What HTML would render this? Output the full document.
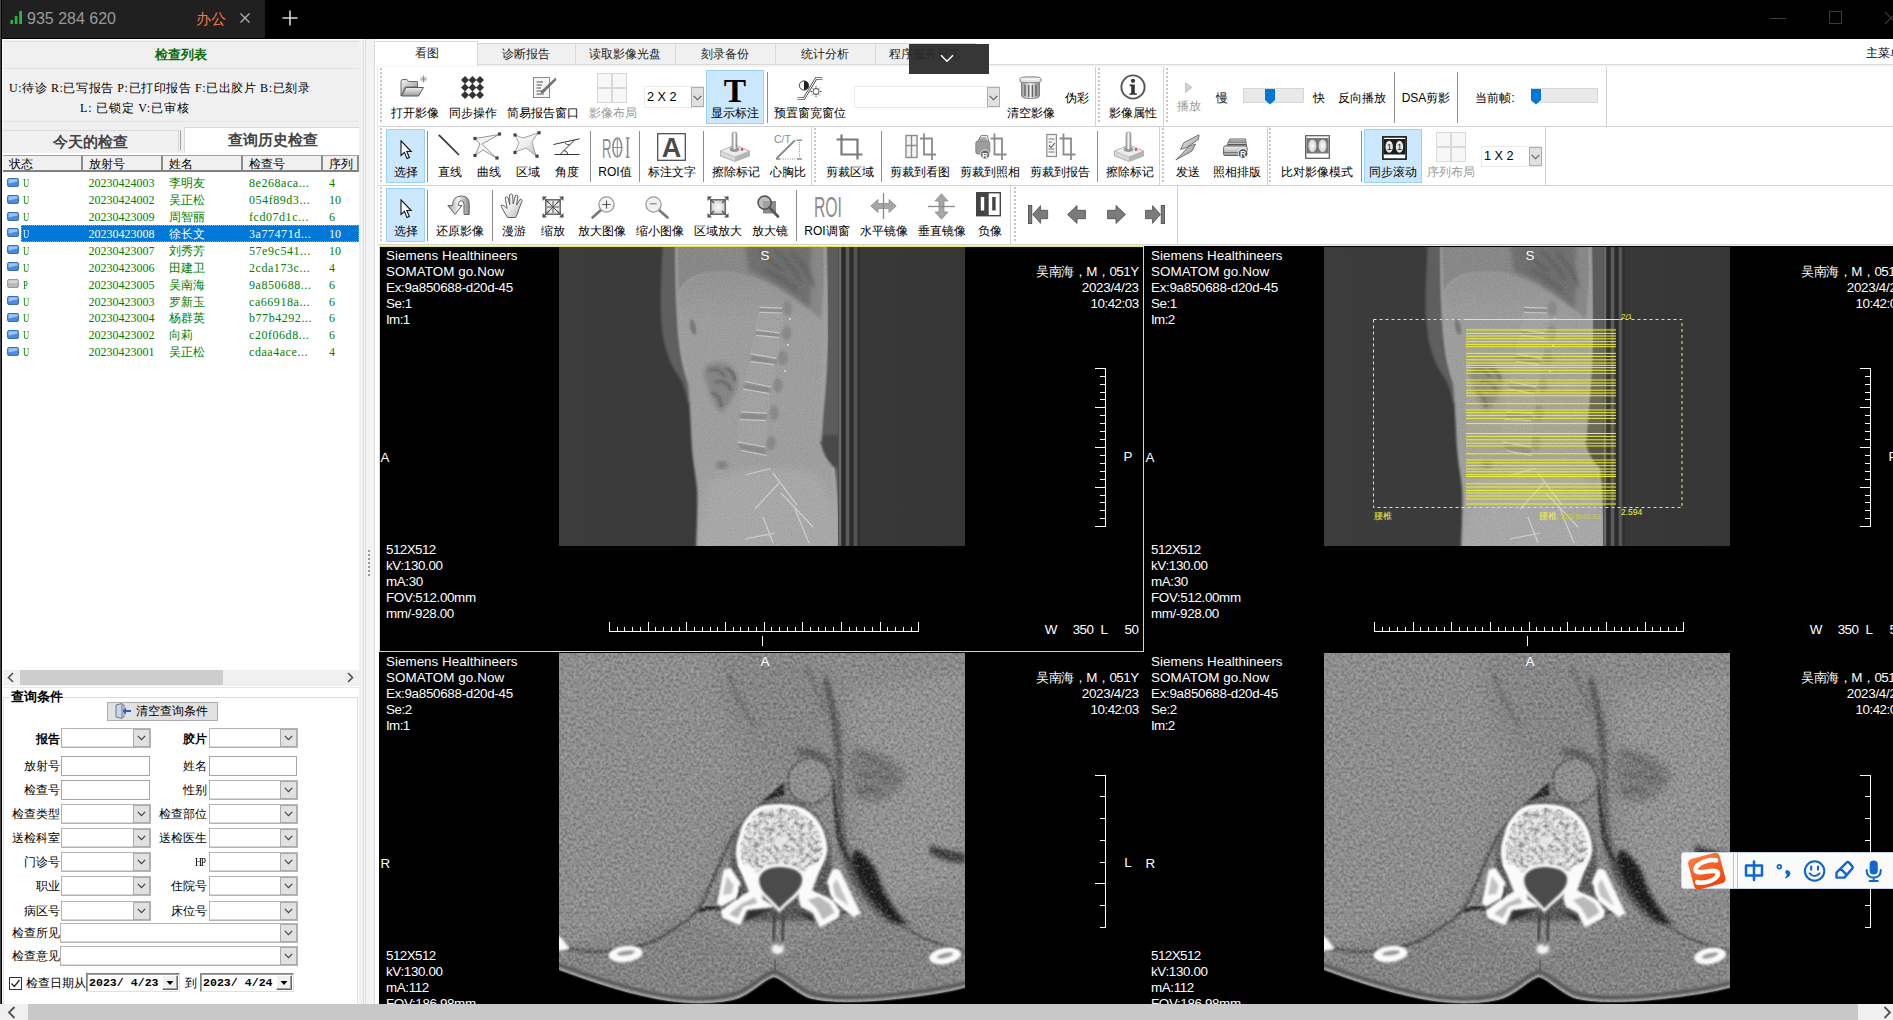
<!DOCTYPE html>
<html lang="zh"><head><meta charset="utf-8"><title>PACS</title><style>
*{box-sizing:border-box;margin:0;padding:0}
html,body{width:1893px;height:1020px;overflow:hidden;background:#f0f0f0}
body{position:relative;font-family:"Liberation Sans",sans-serif;font-size:12px;color:#000}
.a{position:absolute}
.t{position:absolute;white-space:pre;line-height:14px}
.c{text-align:center}
.sf{font-family:"Liberation Serif",serif}
.ss{font-family:"Liberation Sans",sans-serif}
.lbl{position:absolute;white-space:pre;font-size:12px;line-height:14px;height:14px;text-align:center;color:#000}
.dis{color:#9a9a9a}
.sel{position:absolute;background:#cce8ff;border:1px solid #99d1ff}
.sep{position:absolute;width:1px;background:#8c8c8c}
.grip{position:absolute;width:2px;background-image:repeating-linear-gradient(to bottom,#c6c6c6 0,#c6c6c6 2px,transparent 2px,transparent 4px)}
.tb{position:absolute;background:#fff;border-right:1px solid #d2d2d2}
.combo{position:absolute;background:#fff;border:1px solid #ebebeb}
.cbtn{position:absolute;background:#e1e1e1;border:1px solid #adadad}
.inp{position:absolute;background:#fff;border:1px solid #a9a9a9;height:20px}
.vp{position:absolute;background:#000;overflow:hidden}
.vt{position:absolute;white-space:pre;color:#fff;font-size:13.4px;line-height:16px}
.row{position:absolute;left:3px;width:356px;height:17px;color:#008000}
.row .t{top:2px}
.hd{position:absolute;top:155px;height:17px;background:#f0f0f0;border-right:2px solid #8a8a8a;border-top:1px solid #a0a0a0;border-bottom:2px solid #808080;font-size:12px;line-height:16px;padding-left:6px;white-space:pre}
</style></head><body>
<svg width="0" height="0" style="position:absolute"><defs>
<linearGradient id="gm" x1="0" y1="0" x2="1" y2="1"><stop offset="0" stop-color="#f4f4f4"/><stop offset="1" stop-color="#8d8d8d"/></linearGradient>
<linearGradient id="gl" x1="0" y1="0" x2="1" y2="1"><stop offset="0" stop-color="#fff"/><stop offset="0.5" stop-color="#ededed"/><stop offset="1" stop-color="#b4b4b4"/></linearGradient>
<linearGradient id="gv" x1="0" y1="0" x2="0" y2="1"><stop offset="0" stop-color="#f2f2f2"/><stop offset="1" stop-color="#9a9a9a"/></linearGradient>
<linearGradient id="gh" x1="0" y1="0" x2="1" y2="0"><stop offset="0" stop-color="#9a9a9a"/><stop offset="0.5" stop-color="#f5f5f5"/><stop offset="1" stop-color="#8a8a8a"/></linearGradient>
<radialGradient id="gr"><stop offset="0" stop-color="#fff"/><stop offset="1" stop-color="#d0d0d0"/></radialGradient>
</defs></svg>
<svg width="0" height="0" style="position:absolute"><defs>
<filter id="nz" x="0" y="0" width="100%" height="100%" color-interpolation-filters="sRGB"><feTurbulence type="fractalNoise" baseFrequency="0.34" numOctaves="2" seed="7" result="t"/>
<feColorMatrix in="t" type="matrix" values="0 0 0 0 1  0 0 0 0 1  0 0 0 0 1  2.4 0 0 0 -1.2" result="w"/>
<feColorMatrix in="t" type="matrix" values="0 0 0 0 0  0 0 0 0 0  0 0 0 0 0  -2.4 0 0 0 1.2" result="k"/>
<feMerge result="m"><feMergeNode in="w"/><feMergeNode in="k"/></feMerge><feGaussianBlur in="m" stdDeviation="0.6"/></filter>
<filter id="nz2" x="0" y="0" width="100%" height="100%" color-interpolation-filters="sRGB"><feTurbulence type="fractalNoise" baseFrequency="0.8" numOctaves="2" seed="11" result="t"/>
<feColorMatrix in="t" type="matrix" values="0 0 0 0 1  0 0 0 0 1  0 0 0 0 1  2.2 0 0 0 -1.1" result="w"/>
<feColorMatrix in="t" type="matrix" values="0 0 0 0 0  0 0 0 0 0  0 0 0 0 0  -2.2 0 0 0 1.1" result="k"/>
<feMerge><feMergeNode in="w"/><feMergeNode in="k"/></feMerge></filter>
<filter id="nzb" x="0" y="0" width="100%" height="100%" color-interpolation-filters="sRGB"><feTurbulence type="fractalNoise" baseFrequency="0.2" numOctaves="2" seed="5" result="t"/>
<feColorMatrix in="t" type="matrix" values="0 0 0 0 1  0 0 0 0 1  0 0 0 0 1  4.5 0 0 0 -2.0" result="w"/>
<feColorMatrix in="t" type="matrix" values="0 0 0 0 0.45  0 0 0 0 0.45  0 0 0 0 0.45  -4.5 0 0 0 2.0" result="k"/>
<feMerge><feMergeNode in="w"/><feMergeNode in="k"/></feMerge></filter>
<filter id="b0"><feGaussianBlur stdDeviation="0.35"/></filter>
<filter id="b05"><feGaussianBlur stdDeviation="0.55"/></filter>
<filter id="b1"><feGaussianBlur stdDeviation="0.8"/></filter>
<filter id="b2"><feGaussianBlur stdDeviation="2"/></filter>
<filter id="b3"><feGaussianBlur stdDeviation="3.5"/></filter>
<filter id="b6"><feGaussianBlur stdDeviation="7"/></filter>
<linearGradient id="xbg" x1="0" y1="0" x2="1" y2="0"><stop offset="0" stop-color="#3c3c3c"/><stop offset="0.6" stop-color="#393939"/><stop offset="1" stop-color="#363636"/></linearGradient>
<linearGradient id="xbody" x1="0" y1="0" x2="0" y2="1"><stop offset="0" stop-color="#8e8e8e"/><stop offset="0.25" stop-color="#9e9e9e"/><stop offset="0.75" stop-color="#a0a0a0"/><stop offset="1" stop-color="#a8a8a8"/></linearGradient>
<clipPath id="xclip"><rect x="0" y="0" width="406" height="299"/></clipPath>
<clipPath id="bclip"><path d="M116 0 L120 90 L130 136 L138 244 L137 299 L279 299 L275 219 L262 194 L268 87 L267 0 Z"/></clipPath>
<clipPath id="cclip"><rect x="0" y="0" width="406" height="352"/></clipPath>
<clipPath id="vbclip"><path d="M218.6 154.5 C206 154.5 199 157 194.8 162 C189.4 168.4 186 173.6 184.8 179.6 C182 187 180.6 194 180.8 200.5 C181 206 183 211.6 186.2 215.4 L198 221 L242 221 L255.8 215.4 C261.4 209.6 264.4 202 264.3 195.5 C263.9 188 261.6 180.6 258.2 174.4 C254.6 168 249.6 163.2 244 159.6 C236 155.4 227.6 154.5 218.6 154.5 Z"/></clipPath>

<g id="xray">
 <rect x="0" y="0" width="406" height="299" fill="url(#xbg)"/>
 <g clip-path="url(#xclip)">
  <!-- band between body and table -->
  <rect x="262" y="-2" width="18" height="303" fill="#5c5c5c"/>
  <!-- outer soft tissue (upper left only) -->
  <path d="M103.6 -2 C102 30 101 55 102 71.5 C103 82 104 90 105.2 96.6 C108 106 110 112 113 118.5 C117 126 120 130 122.5 134 C125 140 127 146 129 156 L140 150 L130 -2 Z" fill="#5f5f5f" filter="url(#b1)"/>
  <!-- main body -->
  <path d="M116.2 -2 C116 15 116.4 28 116.8 40 C117.4 58 118 72 119.3 87 C120.4 98 122 110 124 118.5 C125.6 125 127 130 128.7 134 C130 146 130.6 158 131.2 168.7 C131.8 178 132 186 132.5 193.8 C133 203 134 212 135 219 C136.4 228 137.6 236 138.2 244 C138.6 262 137.8 280 137.2 301 L279.4 301 C279 270 278 240 274.6 219 C268 212 263 204 262 193.8 C262 178 264 164 265.2 150 C267 130 268 108 268.4 87 C268.4 58 267.4 28 266.8 -2 Z" fill="url(#xbody)" filter="url(#b1)"/>
  <!-- upper/lung darker region above diaphragm -->
  <path d="M117 -2 L119.3 46 C124 36 128 32 131.9 30.7 C138 27 144 26 150.7 26 C162 25.5 174 26 185.2 27.5 C196 30 205 33 213.5 37 C220 41 226 45 232.3 49.5 C238 53 243 57 248 60.5 L262 72 L267 -2 Z" fill="#888" filter="url(#b1)"/>
  <path d="M186 -2 L190 24 C204 30 222 40 236 50 C242 54 247 58 251 62 L252 -2 Z" fill="#707070" filter="url(#b2)"/>
  <path d="M200 4 C210 10 214 20 226 24 M216 2 C224 14 236 18 240 34 M232 4 C240 16 250 22 254 40 M206 22 C216 30 226 30 238 44" stroke="#5c5c5c" stroke-width="3" fill="none" filter="url(#b2)"/>
  <!-- bright diaphragm line -->
  <path d="M120 46 C126 34 136 27 150.7 26 C166 25 176 26 187 28" fill="none" stroke="#a2a2a2" stroke-width="1.2" filter="url(#b1)"/>
  <!-- left skin line bright -->
  <path d="M117.5 -2 C117 30 118.4 62 120.6 88 C122 104 125 120 130 136" fill="none" stroke="#a6a6a6" stroke-width="1.3" filter="url(#b1)"/>
  <!-- bowel gas mottled -->
  <path d="M146 120 C154 114 166 114 172 120 C180 126 180 138 176 146 C172 154 168 160 162 166 C156 160 152 150 150 142 C146 134 144 126 146 120 Z" fill="#858585" filter="url(#b2)"/>
  <path d="M150 124 C156 120 162 124 166 130 M156 136 C162 132 170 136 172 144 M152 146 C158 146 162 152 162 160 M166 122 C172 122 176 128 176 134" stroke="#6c6c6c" stroke-width="3.2" fill="none" filter="url(#b1)"/>
  <ellipse cx="134" cy="80" rx="2.6" ry="8" fill="#767676" filter="url(#b1)" transform="rotate(-12 134 80)"/>
  <ellipse cx="163" cy="218" rx="6" ry="4" fill="#7e7e7e" filter="url(#b2)"/>
  <!-- pelvis brighter -->
  <path d="M150 236 C176 222 222 216 252 226 C270 236 274 262 276 301 L142 301 Z" fill="#a8a8a8" filter="url(#b3)"/>
  <!-- lower back dark notch -->
  <path d="M262 188 C262 200 266 210 275 220 L281 222 L281 188 Z" fill="#4a4a4a" filter="url(#b1)"/>
  <!-- right bright skin edge -->
  <path d="M266 -2 C267 30 268 60 267.6 87 C267 110 266 130 264.4 150 C263 166 261.5 180 261.5 194" fill="none" stroke="#a8a8a8" stroke-width="2.2" filter="url(#b1)"/>
  <path d="M274 220 C277 240 278 270 278.6 301" fill="none" stroke="#b0b0b0" stroke-width="1.8" filter="url(#b1)"/>
  <!-- spine -->
  <path d="M200.5 65.3 L223.4 66 L220.6 86 L197 82.8 Z M197 88.3 L220 90.6 L217.5 111.4 L191.6 106.7 Z M191.6 114.6 L215 117.7 L212 140 L186 134.5 Z M184 142 L210 146.6 L208 166.2 L182 164.8 Z M181 172.6 L207 173.6 L206 200 L179 194.8 Z" fill="#a3a3a3" filter="url(#b1)"/>
  <g fill="#8a8a8a" filter="url(#b1)">
   <path d="M200 61 L223 62 L223 65 L200 64.5Z M197 84 L220.6 87 L220.6 90 L197 87.8Z M191.6 108 L217.5 112.5 L217.5 117 L191.6 114Z M186 136 L212 141 L210 146 L184 141.5Z M182 166 L208 167.5 L207 173 L181 172Z M179 196 L206 201 L208 207.5 L182 202.5Z"/>
   <ellipse cx="228.5" cy="61" rx="4.8" ry="7.5"/><ellipse cx="227.7" cy="86" rx="4.8" ry="7.5"/><ellipse cx="223.8" cy="111" rx="4.8" ry="7.5"/><ellipse cx="219" cy="138" rx="4.8" ry="7.5"/><ellipse cx="215" cy="166" rx="4.8" ry="7.5"/><ellipse cx="212" cy="196" rx="4.8" ry="7"/>
  </g>
  <g stroke="#c8c8c8" stroke-width="1.25" fill="none" filter="url(#b05)">
   <path d="M200 60.3 L223 61.2 M200.5 65.3 L223.4 66 M197 82.8 L220.6 86 M197 88.3 L220 90.6 M191.6 106.7 L217.5 111.4 M191.6 114.6 L215 117.7 M186 134.5 L212 140 M184 142 L210 146.6 M182 164.8 L208 166.2 M181 172.6 L207 173.6 M179 194.8 L206 200 M182 203.5 L208 208.6 M186 228 L212 221.5"/>
   <path d="M196 262 L220 236 M214 226 L238 258 M222 246 L254 280 M186 292 L216 286 M204 270 L214 296 M236 262 L250 296" stroke="#d0d0d0"/>
   <path d="M223 66 L223.6 80 L220.6 86 M220 90.6 L219.6 104 L217.5 111.4 M215 117.7 L214.6 132 L212 140 M210 146.6 L209.6 160 L208 166.2 M207 173.6 L207.4 190 L206 200 M200.5 65.3 L198 78 L197 82.8 M197 88.3 L193 102 L191.6 106.7 M191.6 114.6 L187 130 L186 134.5 M184 142 L182.4 158 L182 164.8 M181 172.6 L179 190 L179 194.8" stroke-width="0.9" stroke="#adadad" opacity="0.6"/>
   <circle cx="231" cy="72" r="1" fill="#ddd" stroke="none"/><circle cx="229" cy="98" r="1" fill="#ddd" stroke="none"/><circle cx="226" cy="124" r="1" fill="#ddd" stroke="none"/>
  </g>
  <!-- grain -->
  <g clip-path="url(#bclip)"><rect x="103" y="0" width="176" height="299" filter="url(#nz2)" opacity="0.10"/></g>
  <!-- table stripes -->
  <rect x="279" y="0" width="23" height="299" fill="#3a3a3a"/>
  <rect x="279.5" y="0" width="2.5" height="299" fill="#6a6a6a"/><rect x="283" y="0" width="3" height="299" fill="#2a2a2a"/><rect x="287" y="0" width="3" height="299" fill="#5a5a5a"/><rect x="291" y="0" width="3" height="299" fill="#2c2c2c"/><rect x="295" y="0" width="3" height="299" fill="#555"/><rect x="299" y="0" width="2.5" height="299" fill="#303030"/>
 </g>
</g>

<g id="ctax">
 <g clip-path="url(#cclip)">
  <rect x="0" y="0" width="406" height="352" fill="#8a8a8a"/>
  <!-- broad tone regions -->
  <path d="M0 0 H180 L175 120 L150 200 L120 260 L60 300 L0 290 Z" fill="#8e8e8e" filter="url(#b6)"/>
  <path d="M290 40 L406 20 V230 L330 250 L300 200 Z" fill="#939393" filter="url(#b6)"/>
  <path d="M0 300 L120 262 L215 300 L320 262 L406 300 V352 H0 Z" fill="#838383" filter="url(#b6)"/>
  <path d="M150 0 L260 0 L265 90 L220 120 L170 80 Z" fill="#868686" filter="url(#b6)"/>
  <!-- dark fat planes right -->
  <path d="M268 20 C276 50 282 70 283 100 C284 130 282 150 286 180 C290 205 300 225 318 250 C328 262 336 268 342 272 L330 270 C312 258 296 240 286 214 C278 190 279 160 278 130 C277 100 272 60 264 30 Z" fill="#585858" filter="url(#b2)"/>
  <path d="M296 196 C306 200 318 214 322 232 C330 248 338 262 350 272 L336 270 C316 256 300 232 292 208 Z" fill="#1e1e1e" filter="url(#b2)"/>
  <path d="M372 192 C384 196 398 200 406 200 L406 210 C392 210 380 206 370 200 Z" fill="#3c3c3c" filter="url(#b2)"/>
  <!-- hilum mottled -->
  <path d="M290 96 C306 92 330 100 346 116 C350 128 340 140 328 146 C316 152 304 150 296 144 C290 132 288 112 290 96 Z" fill="#7a7a7a" filter="url(#b3)"/>
  <path d="M300 100 C312 104 322 112 332 118 M302 122 C314 118 326 124 340 128 M298 140 C306 134 316 136 322 142" stroke="#5a5a5a" stroke-width="2.4" fill="none" filter="url(#b2)"/>
  <path d="M236 96 C250 92 262 98 270 104 L276 120 C268 112 254 104 238 102 Z" fill="#5e5e5e" filter="url(#b2)"/>
  <!-- upper dark streaks -->
  <path d="M170 20 C176 40 184 58 196 72" stroke="#6e6e6e" stroke-width="4" fill="none" filter="url(#b2)"/>
  <path d="M246 14 C256 30 262 44 266 60" stroke="#707070" stroke-width="4" fill="none" filter="url(#b2)"/>
  <!-- crus lines left of vertebra -->
  <path d="M226 132 C205 150 185 165 170 190 C158 215 150 240 138 258 C120 276 100 286 84 292 C60 300 30 300 10 296" stroke="#525252" stroke-width="3" fill="none" filter="url(#b1)"/>
  <path d="M222 140 C204 156 190 172 178 196 C168 220 162 240 150 256" stroke="#6a6a6a" stroke-width="2" fill="none" filter="url(#b1)"/>
  <path d="M140 258 C150 254 160 252 170 262" stroke="#2a2a2a" stroke-width="4" fill="none" filter="url(#b1)"/>
  <!-- right side muscle boundary -->
  <path d="M342 272 C356 282 376 292 406 298" stroke="#5a5a5a" stroke-width="2.5" fill="none" filter="url(#b1)"/>
  <path d="M300 262 C290 258 282 256 274 262" stroke="#3a3a3a" stroke-width="3.5" fill="none" filter="url(#b1)"/>
  <path d="M224 130 C214 140 204 148 196 153 C200 150 212 146 226 142 Z" fill="#2c2c2c" filter="url(#b1)"/>
  <path d="M276 126 C277 150 280 170 284 190 C287 200 292 208 298 214 C290 210 283 202 279 190 C275 172 274 150 273 128 Z" fill="#3a3a3a" filter="url(#b1)"/>
  <!-- aorta -->
  <circle cx="251" cy="128" r="24" fill="#626262" filter="url(#b1)"/>
  <circle cx="251" cy="128" r="21.5" fill="#8f8f8f" filter="url(#b1)"/>
  <!-- dark around vertebra -->
  <path d="M222 146 C190 148 170 178 172 212 C160 236 152 256 166 268 L280 268 C292 250 282 232 272 212 C274 178 256 148 222 146 Z" fill="#5a5a5a" filter="url(#b2)"/>
  <!-- noise over soft tissue -->
  <rect x="0" y="0" width="406" height="352" filter="url(#nz)" opacity="0.25"/>
  <!-- vertebral body -->
  <path d="M218.6 151 C205 151 197 153.5 192.5 159.3 C186 166.5 182.5 172 181.3 178.5 C178.5 186 176.6 194 176.8 200.8 C177 206 178.4 210 180.2 214.5 L196 238 L244 238 L261.6 214.5 C266.2 208 268.4 202 268.3 195.2 C267.9 187 265.4 179 261.8 172.6 C257.9 165.6 252.7 160.6 246.7 156.6 C238 152 228 151 218.6 151 Z" fill="#fafafa" filter="url(#b1)"/>
  <path d="M218.6 155.5 C206 155.5 199.5 158 195.5 162.8 C190 169 186.8 174 185.6 180 C183 187 181.6 194 181.8 200.5 C182 206 184 211 187 214.5 L198 220 L242 220 L255 214.5 C260.5 209 263.4 202 263.3 195.5 C262.9 188 260.6 181 257.4 175 C253.8 168.6 249 164 243.6 160.4 C236 156.4 227.6 155.5 218.6 155.5 Z" fill="#c4c4c4" filter="url(#b1)"/>
  <g clip-path="url(#vbclip)"><rect x="176" y="150" width="94" height="74" filter="url(#nzb)" opacity="0.6"/></g>
  <path d="M212 186 C218 182 226 182 230 188 C226 192 216 192 212 186 Z" fill="#ececec" filter="url(#b2)"/>
  <!-- facets -->
  <path d="M158.9 250.2 L165.5 217.6 L171 215.7 L180.8 230.6 L177 244.2 L162.7 252.4 Z" fill="#fafafa" stroke="#fafafa" stroke-width="2" stroke-linejoin="round" filter="url(#b1)"/>
  <path d="M164 242 L168 223 L174.5 232.5 L172.6 240.6 Z" fill="#c2c2c2" filter="url(#b1)"/>
  <path d="M300.5 260.4 L280 217.6 L274.4 216.7 L268.9 228.8 L272.6 245.5 L294.9 263.2 Z" fill="#fafafa" stroke="#fafafa" stroke-width="2" stroke-linejoin="round" filter="url(#b1)"/>
  <path d="M290 253 L277.5 226 L274 232 L276.4 243 Z" fill="#c2c2c2" filter="url(#b1)"/>
  <!-- pedicles + laminae -->
  <path d="M179.8 211 L192 213.5 L203 232 L202.5 246.5 L213.4 253.2 L187.4 256.2 L180.6 271 L164.4 264.4 L162.6 258.4 L179.6 245.6 L191 239 Z" fill="#fafafa" stroke="#fafafa" stroke-width="2" stroke-linejoin="round" filter="url(#b1)"/>
  <path d="M170 261 L183 250.5 L195.5 244.5 L198.4 250 L184.6 253.4 L178.6 265 Z" fill="#bababa" filter="url(#b1)"/>
  <path d="M262 211 L250 213.5 L240 232 L240.6 246.5 L242.6 253.2 L254 258.8 L261.4 273 L278.4 264.4 L280.2 258.4 L272.8 247.2 L252 238 Z" fill="#fafafa" stroke="#fafafa" stroke-width="2" stroke-linejoin="round" filter="url(#b1)"/>
  <path d="M249 247 L259.6 243.8 L270.4 250.4 L275.4 259.4 L264 266.4 L257.4 255 Z" fill="#bababa" filter="url(#b1)"/>
  <!-- joint lines -->
  <path d="M180.5 233 C182 238 181 243 177.5 246.5" stroke="#3a3a3a" stroke-width="1.6" fill="none" filter="url(#b1)"/>
  <path d="M268.6 232 C268 238 270 243 274 247" stroke="#4a4a4a" stroke-width="1.4" fill="none" filter="url(#b1)"/>
  <!-- canal -->
  <path d="M220.4 210.8 C209 210.8 199 215.5 197.2 225 C196.2 232.5 200.6 239.6 206 245 C211.4 250.4 216.6 254.6 220.4 259.4 C224.4 254.6 230.4 249.6 237 244.2 C242.6 238.6 247.4 231.6 246.2 224.4 C244.6 215.2 232 210.8 220.4 210.8 Z" fill="#fafafa" filter="url(#b1)"/>
  <path d="M220.4 214 C211 214 202.4 217.4 200.4 225 C199.4 231.6 203.2 237.6 208 242.6 C213 247.6 217 251.4 220.4 255.4 C224 251.4 229 246.8 234.8 241.8 C239.8 236.8 244 231 243 224.6 C241.6 217.4 231 214 220.4 214 Z" fill="#4c4c4c" filter="url(#b1)"/>
  <!-- dark under arch -->
  <path d="M190 258 L186 268 L200 262 L213 256.5 Z M252 262 L256 270 L244 262 L232 257 Z" fill="#2e2e2e" filter="url(#b1)"/>
  <!-- spinous -->
  <path d="M215.5 262 L214.5 288 M224.5 262 L223.5 288" stroke="#3a3a3a" stroke-width="2.4" filter="url(#b1)"/>
  <ellipse cx="218.6" cy="296.6" rx="8" ry="5.6" fill="#a8a8a8" filter="url(#b2)"/>
  <path d="M213 294 L217 291.6 L221 294 L224.6 292 L224 298.5 L219 301 L214 299.4 Z" fill="#f2f2f2" filter="url(#b1)"/>
  <path d="M216.6 306 L215.6 322" stroke="#4a4a4a" stroke-width="2" filter="url(#b1)"/>
  <!-- ribs -->
  <g filter="url(#b1)"><ellipse cx="66.5" cy="301" rx="17" ry="8" fill="#fafafa" transform="rotate(-6 66.5 301)"/><ellipse cx="67" cy="300" rx="9" ry="2.6" fill="#9a9a9a" transform="rotate(-8 67 300)"/>
  <ellipse cx="386" cy="303" rx="16" ry="8" fill="#fafafa" transform="rotate(-10 386 303)"/><ellipse cx="386" cy="302.5" rx="8.5" ry="2.6" fill="#9a9a9a" transform="rotate(-14 386 302.5)"/>
  <path d="M-2 280 L8 292 L10 296 L-2 298Z" fill="#fafafa"/></g>
  <!-- outside body (air) -->
  <path d="M-2 316 C30 328 70 342 110 348 C140 352 165 350 180 345 C196 338 206 326 215 324 C224 326 234 338 250 345 C268 350 300 350 338 346 C365 343 390 339 408 334 L408 354 L-2 354 Z" fill="#000"/>
  <path d="M-2 311 C30 323 70 337 110 343.5 C140 347.5 163 345.5 178 340.5 C194 333.5 205 320.5 215 318.5 C225 320.5 236 333.5 252 340.5 C268 345.5 300 346 338 341.5 C365 338.5 390 334.5 408 329.5" fill="none" stroke="#5c5c5c" stroke-width="4" filter="url(#b1)"/>
  <path d="M-2 315 C30 327 70 341 110 347 C140 351 165 349 180 344 C196 337 206 325 215 323 C224 325 234 337 250 344 C268 349 300 349 338 345 C365 342 390 338 408 333" fill="none" stroke="#b0b0b0" stroke-width="1.6" filter="url(#b1)"/>
 </g>
</g>
</defs></svg>
<div class="a" style="left:379px;top:246px;width:1514px;height:758px;background:#000"></div>
<div class="vp" style="left:380px;top:247px;width:764px;height:404px"><svg class="a" style="left:179px;top:0" width="406" height="299" viewBox="0 0 406 299"><use href="#xray"/></svg><svg class="a" style="left:0;top:0" width="764" height="405" viewBox="0 0 764 405"><path d="M725.5 121.25V279.75M715.0 121.25H725.5M720.0 129.18H725.5M720.0 137.10H725.5M720.0 145.03H725.5M720.0 152.95H725.5M715.0 160.88H725.5M720.0 168.80H725.5M720.0 176.72H725.5M720.0 184.65H725.5M720.0 192.57H725.5M715.0 200.50H725.5M720.0 208.43H725.5M720.0 216.35H725.5M720.0 224.27H725.5M720.0 232.20H725.5M715.0 240.12H725.5M720.0 248.05H725.5M720.0 255.97H725.5M720.0 263.90H725.5M720.0 271.82H725.5M715.0 279.75H725.5" stroke="#fff" stroke-width="1" fill="none" shape-rendering="crispEdges"/><path d="M229.5 384.5H538.75M229.50 374.5V384.5M237.23 379.5V384.5M244.96 379.5V384.5M252.69 379.5V384.5M260.43 379.5V384.5M268.16 374.5V384.5M275.89 379.5V384.5M283.62 379.5V384.5M291.35 379.5V384.5M299.08 379.5V384.5M306.81 374.5V384.5M314.54 379.5V384.5M322.27 379.5V384.5M330.01 379.5V384.5M337.74 379.5V384.5M345.47 374.5V384.5M353.20 379.5V384.5M360.93 379.5V384.5M368.66 379.5V384.5M376.39 379.5V384.5M384.12 374.5V384.5M391.86 379.5V384.5M399.59 379.5V384.5M407.32 379.5V384.5M415.05 379.5V384.5M422.78 374.5V384.5M430.51 379.5V384.5M438.24 379.5V384.5M445.98 379.5V384.5M453.71 379.5V384.5M461.44 374.5V384.5M469.17 379.5V384.5M476.90 379.5V384.5M484.63 379.5V384.5M492.36 379.5V384.5M500.09 374.5V384.5M507.82 379.5V384.5M515.56 379.5V384.5M523.29 379.5V384.5M531.02 379.5V384.5M538.75 374.5V384.5M382.5 389.0V398.5" stroke="#fff" stroke-width="1" fill="none" shape-rendering="crispEdges"/></svg><div class="vt" style="left:6px;top:0.5px"><span style="display:block;height:16px;letter-spacing:0.03px">Siemens Healthineers</span><span style="display:block;height:16px;letter-spacing:0.08px">SOMATOM go.Now</span><span style="display:block;height:16px;letter-spacing:-0.3px">Ex:9a850688-d20d-45</span><span style="display:block;height:16px;letter-spacing:-0.45px">Se:1</span><span style="display:block;height:16px;letter-spacing:-0.6px">Im:1</span></div><div class="vt" style="left:458px;width:300.7px;text-align:right;top:16.5px"><span style="display:block;height:16px;letter-spacing:-0.5px">吴南海，M，051Y</span><span style="display:block;height:16px;letter-spacing:-0.3px">2023/4/23</span><span style="display:block;height:16px;letter-spacing:-0.5px">10:42:03</span></div><div class="vt" style="left:6px;top:294.8px"><span style="display:block;height:16px;letter-spacing:-0.55px">512X512</span><span style="display:block;height:16px;letter-spacing:-0.35px">kV:130.00</span><span style="display:block;height:16px;letter-spacing:-0.38px">mA:30</span><span style="display:block;height:16px;letter-spacing:-0.36px">FOV:512.00mm</span><span style="display:block;height:16px;letter-spacing:-0.35px">mm/-928.00</span></div><div class="vt" style="left:0.5px;top:202.5px">A</div><div class="vt" style="left:728px;width:40px;text-align:center;top:202px">P</div><div class="vt" style="left:365px;width:40px;text-align:center;top:1px">S</div><div class="vt" style="left:600px;width:77.5px;text-align:right;top:374.8px">W</div><div class="vt" style="left:650px;width:63.5px;text-align:right;top:374.8px;letter-spacing:-0.5px">350</div><div class="vt" style="left:720.5px;top:374.8px">L</div><div class="vt" style="left:700px;width:58.5px;text-align:right;top:374.8px;letter-spacing:-0.5px">50</div></div>
<div class="vp" style="left:1145px;top:247px;width:764px;height:404px"><svg class="a" style="left:179px;top:0" width="406" height="299" viewBox="0 0 406 299"><use href="#xray"/></svg><svg class="a" style="left:0;top:0" width="764" height="405" viewBox="0 0 764 405"><path d="M725.5 121.25V279.75M715.0 121.25H725.5M720.0 129.18H725.5M720.0 137.10H725.5M720.0 145.03H725.5M720.0 152.95H725.5M715.0 160.88H725.5M720.0 168.80H725.5M720.0 176.72H725.5M720.0 184.65H725.5M720.0 192.57H725.5M715.0 200.50H725.5M720.0 208.43H725.5M720.0 216.35H725.5M720.0 224.27H725.5M720.0 232.20H725.5M715.0 240.12H725.5M720.0 248.05H725.5M720.0 255.97H725.5M720.0 263.90H725.5M720.0 271.82H725.5M715.0 279.75H725.5" stroke="#fff" stroke-width="1" fill="none" shape-rendering="crispEdges"/><path d="M229.5 384.5H538.75M229.50 374.5V384.5M237.23 379.5V384.5M244.96 379.5V384.5M252.69 379.5V384.5M260.43 379.5V384.5M268.16 374.5V384.5M275.89 379.5V384.5M283.62 379.5V384.5M291.35 379.5V384.5M299.08 379.5V384.5M306.81 374.5V384.5M314.54 379.5V384.5M322.27 379.5V384.5M330.01 379.5V384.5M337.74 379.5V384.5M345.47 374.5V384.5M353.20 379.5V384.5M360.93 379.5V384.5M368.66 379.5V384.5M376.39 379.5V384.5M384.12 374.5V384.5M391.86 379.5V384.5M399.59 379.5V384.5M407.32 379.5V384.5M415.05 379.5V384.5M422.78 374.5V384.5M430.51 379.5V384.5M438.24 379.5V384.5M445.98 379.5V384.5M453.71 379.5V384.5M461.44 374.5V384.5M469.17 379.5V384.5M476.90 379.5V384.5M484.63 379.5V384.5M492.36 379.5V384.5M500.09 374.5V384.5M507.82 379.5V384.5M515.56 379.5V384.5M523.29 379.5V384.5M531.02 379.5V384.5M538.75 374.5V384.5M382.5 389.0V398.5" stroke="#fff" stroke-width="1" fill="none" shape-rendering="crispEdges"/></svg><div class="vt" style="left:6px;top:0.5px"><span style="display:block;height:16px;letter-spacing:0.03px">Siemens Healthineers</span><span style="display:block;height:16px;letter-spacing:0.08px">SOMATOM go.Now</span><span style="display:block;height:16px;letter-spacing:-0.3px">Ex:9a850688-d20d-45</span><span style="display:block;height:16px;letter-spacing:-0.45px">Se:1</span><span style="display:block;height:16px;letter-spacing:-0.6px">Im:2</span></div><div class="vt" style="left:458px;width:300.7px;text-align:right;top:16.5px"><span style="display:block;height:16px;letter-spacing:-0.5px">吴南海，M，051Y</span><span style="display:block;height:16px;letter-spacing:-0.3px">2023/4/23</span><span style="display:block;height:16px;letter-spacing:-0.5px">10:42:03</span></div><div class="vt" style="left:6px;top:294.8px"><span style="display:block;height:16px;letter-spacing:-0.55px">512X512</span><span style="display:block;height:16px;letter-spacing:-0.35px">kV:130.00</span><span style="display:block;height:16px;letter-spacing:-0.38px">mA:30</span><span style="display:block;height:16px;letter-spacing:-0.36px">FOV:512.00mm</span><span style="display:block;height:16px;letter-spacing:-0.35px">mm/-928.00</span></div><div class="vt" style="left:0.5px;top:202.5px">A</div><div class="vt" style="left:728px;width:40px;text-align:center;top:202px">P</div><div class="vt" style="left:365px;width:40px;text-align:center;top:1px">S</div><div class="vt" style="left:600px;width:77.5px;text-align:right;top:374.8px">W</div><div class="vt" style="left:650px;width:63.5px;text-align:right;top:374.8px;letter-spacing:-0.5px">350</div><div class="vt" style="left:720.5px;top:374.8px">L</div><div class="vt" style="left:700px;width:58.5px;text-align:right;top:374.8px;letter-spacing:-0.5px">50</div></div>
<div class="vp" style="left:380px;top:653px;width:764px;height:351px"><svg class="a" style="left:179px;top:0" width="406" height="352" viewBox="0 0 406 352"><use href="#ctax"/></svg><svg class="a" style="left:0;top:0" width="764" height="405" viewBox="0 0 764 405"><path d="M725.5 122V274.5M715.0 122.00H725.5M720.0 143.79H725.5M720.0 165.57H725.5M720.0 187.36H725.5M720.0 209.14H725.5M715.0 230.93H725.5M720.0 252.71H725.5M720.0 274.50H725.5" stroke="#fff" stroke-width="1" fill="none" shape-rendering="crispEdges"/></svg><div class="vt" style="left:6px;top:0.5px"><span style="display:block;height:16px;letter-spacing:0.03px">Siemens Healthineers</span><span style="display:block;height:16px;letter-spacing:0.08px">SOMATOM go.Now</span><span style="display:block;height:16px;letter-spacing:-0.3px">Ex:9a850688-d20d-45</span><span style="display:block;height:16px;letter-spacing:-0.45px">Se:2</span><span style="display:block;height:16px;letter-spacing:-0.6px">Im:1</span></div><div class="vt" style="left:458px;width:300.7px;text-align:right;top:16.5px"><span style="display:block;height:16px;letter-spacing:-0.5px">吴南海，M，051Y</span><span style="display:block;height:16px;letter-spacing:-0.3px">2023/4/23</span><span style="display:block;height:16px;letter-spacing:-0.5px">10:42:03</span></div><div class="vt" style="left:6px;top:294.8px"><span style="display:block;height:16px;letter-spacing:-0.55px">512X512</span><span style="display:block;height:16px;letter-spacing:-0.35px">kV:130.00</span><span style="display:block;height:16px;letter-spacing:-0.38px">mA:112</span><span style="display:block;height:16px;letter-spacing:-0.36px">FOV:186.98mm</span></div><div class="vt" style="left:0.5px;top:202.5px">R</div><div class="vt" style="left:728px;width:40px;text-align:center;top:202px">L</div><div class="vt" style="left:365px;width:40px;text-align:center;top:1px">A</div></div>
<div class="vp" style="left:1145px;top:653px;width:764px;height:351px"><svg class="a" style="left:179px;top:0" width="406" height="352" viewBox="0 0 406 352"><use href="#ctax"/></svg><svg class="a" style="left:0;top:0" width="764" height="405" viewBox="0 0 764 405"><path d="M725.5 122V274.5M715.0 122.00H725.5M720.0 143.79H725.5M720.0 165.57H725.5M720.0 187.36H725.5M720.0 209.14H725.5M715.0 230.93H725.5M720.0 252.71H725.5M720.0 274.50H725.5" stroke="#fff" stroke-width="1" fill="none" shape-rendering="crispEdges"/></svg><div class="vt" style="left:6px;top:0.5px"><span style="display:block;height:16px;letter-spacing:0.03px">Siemens Healthineers</span><span style="display:block;height:16px;letter-spacing:0.08px">SOMATOM go.Now</span><span style="display:block;height:16px;letter-spacing:-0.3px">Ex:9a850688-d20d-45</span><span style="display:block;height:16px;letter-spacing:-0.45px">Se:2</span><span style="display:block;height:16px;letter-spacing:-0.6px">Im:2</span></div><div class="vt" style="left:458px;width:300.7px;text-align:right;top:16.5px"><span style="display:block;height:16px;letter-spacing:-0.5px">吴南海，M，051Y</span><span style="display:block;height:16px;letter-spacing:-0.3px">2023/4/23</span><span style="display:block;height:16px;letter-spacing:-0.5px">10:42:03</span></div><div class="vt" style="left:6px;top:294.8px"><span style="display:block;height:16px;letter-spacing:-0.55px">512X512</span><span style="display:block;height:16px;letter-spacing:-0.35px">kV:130.00</span><span style="display:block;height:16px;letter-spacing:-0.38px">mA:112</span><span style="display:block;height:16px;letter-spacing:-0.36px">FOV:186.98mm</span></div><div class="vt" style="left:0.5px;top:202.5px">R</div><div class="vt" style="left:728px;width:40px;text-align:center;top:202px">L</div><div class="vt" style="left:365px;width:40px;text-align:center;top:1px">A</div></div>
<div class="a" style="left:379px;top:246px;width:765px;height:406px;border:1px solid #e6e650;pointer-events:none"></div>
<svg class="a" style="left:0;top:0" width="1893" height="1020" viewBox="0 0 1893 1020"><rect x="1373.5" y="319.5" width="308.5" height="188" fill="none" stroke="#f0f040" stroke-width="1" stroke-dasharray="3 3"/><rect x="1466" y="328" width="150" height="178" fill="#e8e830" opacity="0.10"/><path d="M1464 319.5H1619" stroke="#f0f040" stroke-width="1" fill="none"/><path d="M1466 330.0H1616M1466 333.4H1616M1466 336.0H1616M1466 338.8H1616M1466 341.7H1616M1466 344.4H1616M1466 346.7H1616M1466 353.4H1616M1466 356.4H1616M1466 359.8H1616M1466 363.0H1616M1466 365.4H1616M1466 367.6H1616M1466 370.3H1616M1466 373.3H1616M1466 380.0H1616M1466 383.0H1616M1466 385.7H1616M1466 390.2H1616M1466 393.0H1616M1466 395.8H1616M1466 403.7H1616M1466 410.0H1616M1466 412.7H1616M1466 415.4H1616M1466 418.4H1616M1466 423.6H1616M1466 433.5H1616M1466 436.4H1616M1466 439.8H1616M1466 443.2H1616M1466 446.0H1616M1466 453.8H1616M1466 460.0H1616M1466 462.8H1616M1466 465.7H1616M1466 469.0H1616M1466 471.8H1616M1466 474.7H1616M1466 476.5H1616M1466 483.8H1616M1466 487.0H1616M1466 490.5H1616M1466 493.0H1616M1466 496.0H1616M1466 499.0H1616M1466 504.0H1616" stroke="#eeee38" stroke-width="1" fill="none"/><text x="1621" y="318.5" font-family="Liberation Sans,sans-serif" font-size="8" fill="#f0f040">2/1</text><text x="1621" y="514.5" font-family="Liberation Sans,sans-serif" font-size="8.5" fill="#f0f040">2.594</text><text x="1374" y="519" font-family="Liberation Sans,sans-serif" font-size="9" fill="#f0f040">腰椎</text><text x="1539" y="519" font-family="Liberation Sans,sans-serif" font-size="9" fill="#f0f040">腰椎</text><text x="1560" y="518.5" font-family="Liberation Sans,sans-serif" font-size="7" fill="#cfcf38">3.80 Br40 S3</text></svg>
<div class="a" style="left:0;top:0;width:1893px;height:39px;background:#000"></div>
<div class="a" style="left:0;top:0;width:265px;height:38px;background:#202020"></div>
<div class="a" style="left:0;top:0;width:1px;height:1004px;background:#444"></div><div class="a" style="left:1px;top:0;width:1px;height:1004px;background:#000"></div>
<svg class="a" style="left:10px;top:11px" width="14" height="13" viewBox="0 0 14 13"><rect x="0.5" y="9" width="2.6" height="4" fill="#2fb344"/><rect x="4.8" y="5" width="2.6" height="8" fill="#2fb344"/><rect x="9.2" y="0" width="2.8" height="13" fill="#2fb344"/></svg>
<div class="t" style="left:27px;top:9px;font-size:16px;line-height:20px;color:#9a9a9a">935 284 620</div>
<div class="t" style="left:196px;top:8.5px;font-size:15px;line-height:20px;color:#ea7a50">办公</div>
<svg class="a" style="left:239px;top:12px" width="12" height="12" viewBox="0 0 12 12"><path d="M1.5 1.5L10.5 10.5M10.5 1.5L1.5 10.5" stroke="#b0b0b0" stroke-width="1.4" fill="none"/></svg>
<svg class="a" style="left:282px;top:10px" width="16" height="16" viewBox="0 0 16 16"><path d="M8 0.5V15.5M0.5 8H15.5" stroke="#d8d8d8" stroke-width="1.6" fill="none"/></svg>
<div class="a" style="left:1770px;top:18px;width:16px;height:1px;background:#3c3c3c"></div>
<div class="a" style="left:1829px;top:11px;width:13px;height:13px;border:1px solid #3c3c3c"></div>
<svg class="a" style="left:1884px;top:11px" width="14" height="14" viewBox="0 0 14 14"><path d="M1 1L13 13M13 1L1 13" stroke="#3c3c3c" stroke-width="1.2" fill="none"/></svg>
<div class="a" style="left:2px;top:39px;width:362px;height:965px;background:#f0f0f0;border-top:1px solid #fff;border-left:1px solid #fff"></div><div class="a" style="left:3px;top:41px;width:360px;height:1px;background:#dedede"></div>
<div class="t c" style="left:2px;width:358px;top:47px;font-size:13px;line-height:16px;font-weight:bold;color:#0b6b0b">检查列表</div>
<div class="a" style="left:2px;top:68px;width:360px;height:54px;border:1px solid #e2e2e2;border-left:none"></div>
<div class="t sf" style="left:9px;top:81px;letter-spacing:0.58px">U:<span class="ss">待诊</span> R:<span class="ss">已写报告</span> P:<span class="ss">已打印报告</span> F:<span class="ss">已出胶片</span> B:<span class="ss">已刻录</span></div>
<div class="t sf" style="left:80px;top:101px;letter-spacing:0.8px">L: <span class="ss">已锁定</span> V:<span class="ss">已审核</span></div>
<div class="a" style="left:2px;top:130px;width:177px;height:22px;background:#f0f0f0;border:1px solid #d9d9d9;border-left:none;border-bottom:none"></div>
<div class="a" style="left:180px;top:130px;width:1px;height:20px;background:#a0a0a0"></div>
<div class="a" style="left:184px;top:127px;width:177px;height:26px;background:#fff;border:1px solid #d9d9d9;border-bottom:none"></div>
<div class="t c" style="left:2px;width:177px;top:133px;font-size:15px;line-height:18px;font-weight:bold;color:#444">今天的检查</div>
<div class="t c" style="left:184px;width:177px;top:131px;font-size:15px;line-height:18px;font-weight:bold;color:#444">查询历史检查</div>
<div class="a" style="left:3px;top:153px;width:356px;height:517px;background:#fff"></div>
<div class="hd" style="left:3px;width:80px">状态</div>
<div class="hd" style="left:83px;width:80px">放射号</div>
<div class="hd" style="left:163px;width:80px">姓名</div>
<div class="hd" style="left:243px;width:80px">检查号</div>
<div class="hd" style="left:323px;width:36px">序列</div>
<div class="row" style="top:174.2px"><svg class="a" style="left:4px;top:3.5px" width="12" height="9" viewBox="0 0 13 10"><rect x="0.5" y="0.5" width="12" height="9" rx="1.5" fill="#4a8be0" stroke="#2a5db0"/><path d="M1.5 1.5H11.5V4L1.5 6Z" fill="#9cc4f5"/></svg><div class="t sf" style="left:20px;color:#008000;transform:scaleX(0.72);transform-origin:0 0">U</div><div class="t sf" style="left:85.5px;color:#008000">20230424003</div><div class="t" style="left:166px;color:#008000">李明友</div><div class="t sf" style="left:246px;color:#008000;letter-spacing:0.55px">8e268aca...</div><div class="t sf" style="left:326px;color:#008000">4</div></div>
<div class="row" style="top:191.1px"><svg class="a" style="left:4px;top:3.5px" width="12" height="9" viewBox="0 0 13 10"><rect x="0.5" y="0.5" width="12" height="9" rx="1.5" fill="#4a8be0" stroke="#2a5db0"/><path d="M1.5 1.5H11.5V4L1.5 6Z" fill="#9cc4f5"/></svg><div class="t sf" style="left:20px;color:#008000;transform:scaleX(0.72);transform-origin:0 0">U</div><div class="t sf" style="left:85.5px;color:#008000">20230424002</div><div class="t" style="left:166px;color:#008000">吴正松</div><div class="t sf" style="left:246px;color:#008000;letter-spacing:0.55px">054f89d3...</div><div class="t sf" style="left:326px;color:#008000">10</div></div>
<div class="row" style="top:208.0px"><svg class="a" style="left:4px;top:3.5px" width="12" height="9" viewBox="0 0 13 10"><rect x="0.5" y="0.5" width="12" height="9" rx="1.5" fill="#4a8be0" stroke="#2a5db0"/><path d="M1.5 1.5H11.5V4L1.5 6Z" fill="#9cc4f5"/></svg><div class="t sf" style="left:20px;color:#008000;transform:scaleX(0.72);transform-origin:0 0">U</div><div class="t sf" style="left:85.5px;color:#008000">20230423009</div><div class="t" style="left:166px;color:#008000">周智丽</div><div class="t sf" style="left:246px;color:#008000;letter-spacing:0.55px">fcd07d1c...</div><div class="t sf" style="left:326px;color:#008000">6</div></div>
<div class="row" style="top:224.9px"><div class="a" style="left:18px;top:0;width:338px;height:17px;background:#0078d7;outline:1px dotted #6fb0e8;outline-offset:-1px"></div><svg class="a" style="left:4px;top:3.5px" width="12" height="9" viewBox="0 0 13 10"><rect x="0.5" y="0.5" width="12" height="9" rx="1.5" fill="#4a8be0" stroke="#2a5db0"/><path d="M1.5 1.5H11.5V4L1.5 6Z" fill="#9cc4f5"/></svg><div class="t sf" style="left:20px;color:#fff;transform:scaleX(0.72);transform-origin:0 0">U</div><div class="t sf" style="left:85.5px;color:#fff">20230423008</div><div class="t" style="left:166px;color:#fff">徐长文</div><div class="t sf" style="left:246px;color:#fff;letter-spacing:0.55px">3a77471d...</div><div class="t sf" style="left:326px;color:#fff">10</div></div>
<div class="row" style="top:241.8px"><svg class="a" style="left:4px;top:3.5px" width="12" height="9" viewBox="0 0 13 10"><rect x="0.5" y="0.5" width="12" height="9" rx="1.5" fill="#4a8be0" stroke="#2a5db0"/><path d="M1.5 1.5H11.5V4L1.5 6Z" fill="#9cc4f5"/></svg><div class="t sf" style="left:20px;color:#008000;transform:scaleX(0.72);transform-origin:0 0">U</div><div class="t sf" style="left:85.5px;color:#008000">20230423007</div><div class="t" style="left:166px;color:#008000">刘秀芳</div><div class="t sf" style="left:246px;color:#008000;letter-spacing:0.55px">57e9c541...</div><div class="t sf" style="left:326px;color:#008000">10</div></div>
<div class="row" style="top:258.7px"><svg class="a" style="left:4px;top:3.5px" width="12" height="9" viewBox="0 0 13 10"><rect x="0.5" y="0.5" width="12" height="9" rx="1.5" fill="#4a8be0" stroke="#2a5db0"/><path d="M1.5 1.5H11.5V4L1.5 6Z" fill="#9cc4f5"/></svg><div class="t sf" style="left:20px;color:#008000;transform:scaleX(0.72);transform-origin:0 0">U</div><div class="t sf" style="left:85.5px;color:#008000">20230423006</div><div class="t" style="left:166px;color:#008000">田建卫</div><div class="t sf" style="left:246px;color:#008000;letter-spacing:0.55px">2cda173c...</div><div class="t sf" style="left:326px;color:#008000">4</div></div>
<div class="row" style="top:275.6px"><svg class="a" style="left:4px;top:3.5px" width="12" height="9" viewBox="0 0 13 10"><rect x="0.5" y="0.5" width="12" height="9" rx="1.5" fill="#b9b9b9" stroke="#8c8c8c"/><rect x="1.5" y="1.5" width="10" height="3" fill="#d4d4d4"/></svg><div class="t sf" style="left:20px;color:#008000;transform:scaleX(0.72);transform-origin:0 0">P</div><div class="t sf" style="left:85.5px;color:#008000">20230423005</div><div class="t" style="left:166px;color:#008000">吴南海</div><div class="t sf" style="left:246px;color:#008000;letter-spacing:0.55px">9a850688...</div><div class="t sf" style="left:326px;color:#008000">6</div></div>
<div class="row" style="top:292.5px"><svg class="a" style="left:4px;top:3.5px" width="12" height="9" viewBox="0 0 13 10"><rect x="0.5" y="0.5" width="12" height="9" rx="1.5" fill="#4a8be0" stroke="#2a5db0"/><path d="M1.5 1.5H11.5V4L1.5 6Z" fill="#9cc4f5"/></svg><div class="t sf" style="left:20px;color:#008000;transform:scaleX(0.72);transform-origin:0 0">U</div><div class="t sf" style="left:85.5px;color:#008000">20230423003</div><div class="t" style="left:166px;color:#008000">罗新玉</div><div class="t sf" style="left:246px;color:#008000;letter-spacing:0.55px">ca66918a...</div><div class="t sf" style="left:326px;color:#008000">6</div></div>
<div class="row" style="top:309.4px"><svg class="a" style="left:4px;top:3.5px" width="12" height="9" viewBox="0 0 13 10"><rect x="0.5" y="0.5" width="12" height="9" rx="1.5" fill="#4a8be0" stroke="#2a5db0"/><path d="M1.5 1.5H11.5V4L1.5 6Z" fill="#9cc4f5"/></svg><div class="t sf" style="left:20px;color:#008000;transform:scaleX(0.72);transform-origin:0 0">U</div><div class="t sf" style="left:85.5px;color:#008000">20230423004</div><div class="t" style="left:166px;color:#008000">杨群英</div><div class="t sf" style="left:246px;color:#008000;letter-spacing:0.55px">b77b4292...</div><div class="t sf" style="left:326px;color:#008000">6</div></div>
<div class="row" style="top:326.3px"><svg class="a" style="left:4px;top:3.5px" width="12" height="9" viewBox="0 0 13 10"><rect x="0.5" y="0.5" width="12" height="9" rx="1.5" fill="#4a8be0" stroke="#2a5db0"/><path d="M1.5 1.5H11.5V4L1.5 6Z" fill="#9cc4f5"/></svg><div class="t sf" style="left:20px;color:#008000;transform:scaleX(0.72);transform-origin:0 0">U</div><div class="t sf" style="left:85.5px;color:#008000">20230423002</div><div class="t" style="left:166px;color:#008000">向莉</div><div class="t sf" style="left:246px;color:#008000;letter-spacing:0.55px">c20f06d8...</div><div class="t sf" style="left:326px;color:#008000">6</div></div>
<div class="row" style="top:343.2px"><svg class="a" style="left:4px;top:3.5px" width="12" height="9" viewBox="0 0 13 10"><rect x="0.5" y="0.5" width="12" height="9" rx="1.5" fill="#4a8be0" stroke="#2a5db0"/><path d="M1.5 1.5H11.5V4L1.5 6Z" fill="#9cc4f5"/></svg><div class="t sf" style="left:20px;color:#008000;transform:scaleX(0.72);transform-origin:0 0">U</div><div class="t sf" style="left:85.5px;color:#008000">20230423001</div><div class="t" style="left:166px;color:#008000">吴正松</div><div class="t sf" style="left:246px;color:#008000;letter-spacing:0.55px">cdaa4ace...</div><div class="t sf" style="left:326px;color:#008000">4</div></div>
<div class="a" style="left:3px;top:670px;width:356px;height:16px;background:#f0f0f0"></div>
<div class="a" style="left:20px;top:670px;width:203px;height:15px;background:#cdcdcd"></div>
<svg class="a" style="left:7px;top:672px" width="8" height="11" viewBox="0 0 8 11"><path d="M6 1L1.5 5.5L6 10" stroke="#505050" stroke-width="1.6" fill="none"/></svg>
<svg class="a" style="left:346px;top:672px" width="8" height="11" viewBox="0 0 8 11"><path d="M2 1L6.5 5.5L2 10" stroke="#505050" stroke-width="1.6" fill="none"/></svg>
<div class="a" style="left:3px;top:686px;width:356px;height:318px;background:#fff"></div><div class="a" style="left:3px;top:687px;width:356px;height:1px;background:#e6e6e6"></div>
<div class="a" style="left:3px;top:697px;width:355px;height:310px;border:1px solid #dcdcdc;border-bottom:none"></div>
<div class="t" style="left:10px;top:689px;background:#fff;padding:0 1px;font-weight:bold;font-size:13px;line-height:15px">查询条件</div>
<div class="a" style="left:107px;top:702px;width:111px;height:19px;background:#e1e1e1;border:1px solid #adadad"></div>
<svg class="a" style="left:115px;top:703px" width="17" height="16" viewBox="0 0 17 16"><path d="M1 2L7 0.5V15.5L1 14Z" fill="#c9d6ea" stroke="#5d6f8f" stroke-width="0.9"/><path d="M7 2H9V14H7" fill="none" stroke="#777" stroke-width="0.9"/><path d="M16 7H11V4.5L7.5 8L11 11.5V9H16Z" fill="#1e62c8"/></svg>
<div class="t" style="left:135.5px;top:704px;font-size:12px;line-height:15px">清空查询条件</div>
<div class="t" style="left:-40px;width:100px;text-align:right;top:731.5px;font-weight:bold;font-size:12px">报告</div>
<div class="t" style="left:107px;width:100px;text-align:right;top:731.5px;font-weight:bold;font-size:12px">胶片</div>
<div class="a" style="left:61px;top:728px;width:90px;height:20px;background:#fff;border:1px solid #b4b4b4;box-shadow:inset -1px -1px 0 #d8d8d8"></div><div class="a" style="left:133px;top:729px;width:17px;height:18px;background:#e1e1e1;border:1px solid #adadad"></div><svg class="a" style="left:137px;top:735px" width="9" height="6" viewBox="0 0 9 6"><path d="M0.8 0.8L4.5 4.6L8.2 0.8" stroke="#444" stroke-width="1.2" fill="none"/></svg>
<div class="a" style="left:209px;top:728px;width:89px;height:20px;background:#fff;border:1px solid #b4b4b4;box-shadow:inset -1px -1px 0 #d8d8d8"></div><div class="a" style="left:280px;top:729px;width:17px;height:18px;background:#e1e1e1;border:1px solid #adadad"></div><svg class="a" style="left:284px;top:735px" width="9" height="6" viewBox="0 0 9 6"><path d="M0.8 0.8L4.5 4.6L8.2 0.8" stroke="#444" stroke-width="1.2" fill="none"/></svg>
<div class="t" style="left:-40px;width:100px;text-align:right;top:759px;font-size:12px">放射号</div>
<div class="t" style="left:107px;width:100px;text-align:right;top:759px;font-size:12px">姓名</div>
<div class="a" style="left:61px;top:756px;width:89px;height:20px;background:#fff;border:1px solid #a6a6a6"></div>
<div class="a" style="left:209px;top:756px;width:88px;height:20px;background:#fff;border:1px solid #a6a6a6"></div>
<div class="t" style="left:-40px;width:100px;text-align:right;top:783px;font-size:12px">检查号</div>
<div class="t" style="left:107px;width:100px;text-align:right;top:783px;font-size:12px">性别</div>
<div class="a" style="left:61px;top:780px;width:89px;height:20px;background:#fff;border:1px solid #a6a6a6"></div>
<div class="a" style="left:209px;top:780px;width:89px;height:20px;background:#fff;border:1px solid #b4b4b4;box-shadow:inset -1px -1px 0 #d8d8d8"></div><div class="a" style="left:280px;top:781px;width:17px;height:18px;background:#e1e1e1;border:1px solid #adadad"></div><svg class="a" style="left:284px;top:787px" width="9" height="6" viewBox="0 0 9 6"><path d="M0.8 0.8L4.5 4.6L8.2 0.8" stroke="#444" stroke-width="1.2" fill="none"/></svg>
<div class="t" style="left:-40px;width:100px;text-align:right;top:807px;font-size:12px">检查类型</div>
<div class="t" style="left:107px;width:100px;text-align:right;top:807px;font-size:12px">检查部位</div>
<div class="a" style="left:61px;top:804px;width:90px;height:20px;background:#fff;border:1px solid #b4b4b4;box-shadow:inset -1px -1px 0 #d8d8d8"></div><div class="a" style="left:133px;top:805px;width:17px;height:18px;background:#e1e1e1;border:1px solid #adadad"></div><svg class="a" style="left:137px;top:811px" width="9" height="6" viewBox="0 0 9 6"><path d="M0.8 0.8L4.5 4.6L8.2 0.8" stroke="#444" stroke-width="1.2" fill="none"/></svg>
<div class="a" style="left:209px;top:804px;width:89px;height:20px;background:#fff;border:1px solid #b4b4b4;box-shadow:inset -1px -1px 0 #d8d8d8"></div><div class="a" style="left:280px;top:805px;width:17px;height:18px;background:#e1e1e1;border:1px solid #adadad"></div><svg class="a" style="left:284px;top:811px" width="9" height="6" viewBox="0 0 9 6"><path d="M0.8 0.8L4.5 4.6L8.2 0.8" stroke="#444" stroke-width="1.2" fill="none"/></svg>
<div class="t" style="left:-40px;width:100px;text-align:right;top:831px;font-size:12px">送检科室</div>
<div class="t" style="left:107px;width:100px;text-align:right;top:831px;font-size:12px">送检医生</div>
<div class="a" style="left:61px;top:828px;width:90px;height:20px;background:#fff;border:1px solid #b4b4b4;box-shadow:inset -1px -1px 0 #d8d8d8"></div><div class="a" style="left:133px;top:829px;width:17px;height:18px;background:#e1e1e1;border:1px solid #adadad"></div><svg class="a" style="left:137px;top:835px" width="9" height="6" viewBox="0 0 9 6"><path d="M0.8 0.8L4.5 4.6L8.2 0.8" stroke="#444" stroke-width="1.2" fill="none"/></svg>
<div class="a" style="left:209px;top:828px;width:89px;height:20px;background:#fff;border:1px solid #b4b4b4;box-shadow:inset -1px -1px 0 #d8d8d8"></div><div class="a" style="left:280px;top:829px;width:17px;height:18px;background:#e1e1e1;border:1px solid #adadad"></div><svg class="a" style="left:284px;top:835px" width="9" height="6" viewBox="0 0 9 6"><path d="M0.8 0.8L4.5 4.6L8.2 0.8" stroke="#444" stroke-width="1.2" fill="none"/></svg>
<div class="t" style="left:-40px;width:100px;text-align:right;top:855px;font-size:12px">门诊号</div>
<div class="t sf" style="left:195px;top:855px;font-size:12px;letter-spacing:-1.5px;transform:scaleX(0.8);transform-origin:0 0">HP</div>
<div class="a" style="left:61px;top:852px;width:90px;height:20px;background:#fff;border:1px solid #b4b4b4;box-shadow:inset -1px -1px 0 #d8d8d8"></div><div class="a" style="left:133px;top:853px;width:17px;height:18px;background:#e1e1e1;border:1px solid #adadad"></div><svg class="a" style="left:137px;top:859px" width="9" height="6" viewBox="0 0 9 6"><path d="M0.8 0.8L4.5 4.6L8.2 0.8" stroke="#444" stroke-width="1.2" fill="none"/></svg>
<div class="a" style="left:209px;top:852px;width:89px;height:20px;background:#fff;border:1px solid #b4b4b4;box-shadow:inset -1px -1px 0 #d8d8d8"></div><div class="a" style="left:280px;top:853px;width:17px;height:18px;background:#e1e1e1;border:1px solid #adadad"></div><svg class="a" style="left:284px;top:859px" width="9" height="6" viewBox="0 0 9 6"><path d="M0.8 0.8L4.5 4.6L8.2 0.8" stroke="#444" stroke-width="1.2" fill="none"/></svg>
<div class="t" style="left:-40px;width:100px;text-align:right;top:879px;font-size:12px">职业</div>
<div class="t" style="left:107px;width:100px;text-align:right;top:879px;font-size:12px">住院号</div>
<div class="a" style="left:61px;top:876px;width:90px;height:20px;background:#fff;border:1px solid #b4b4b4;box-shadow:inset -1px -1px 0 #d8d8d8"></div><div class="a" style="left:133px;top:877px;width:17px;height:18px;background:#e1e1e1;border:1px solid #adadad"></div><svg class="a" style="left:137px;top:883px" width="9" height="6" viewBox="0 0 9 6"><path d="M0.8 0.8L4.5 4.6L8.2 0.8" stroke="#444" stroke-width="1.2" fill="none"/></svg>
<div class="a" style="left:209px;top:876px;width:89px;height:20px;background:#fff;border:1px solid #b4b4b4;box-shadow:inset -1px -1px 0 #d8d8d8"></div><div class="a" style="left:280px;top:877px;width:17px;height:18px;background:#e1e1e1;border:1px solid #adadad"></div><svg class="a" style="left:284px;top:883px" width="9" height="6" viewBox="0 0 9 6"><path d="M0.8 0.8L4.5 4.6L8.2 0.8" stroke="#444" stroke-width="1.2" fill="none"/></svg>
<div class="t" style="left:-40px;width:100px;text-align:right;top:904px;font-size:12px">病区号</div>
<div class="t" style="left:107px;width:100px;text-align:right;top:904px;font-size:12px">床位号</div>
<div class="a" style="left:61px;top:901px;width:90px;height:20px;background:#fff;border:1px solid #b4b4b4;box-shadow:inset -1px -1px 0 #d8d8d8"></div><div class="a" style="left:133px;top:902px;width:17px;height:18px;background:#e1e1e1;border:1px solid #adadad"></div><svg class="a" style="left:137px;top:908px" width="9" height="6" viewBox="0 0 9 6"><path d="M0.8 0.8L4.5 4.6L8.2 0.8" stroke="#444" stroke-width="1.2" fill="none"/></svg>
<div class="a" style="left:209px;top:901px;width:89px;height:20px;background:#fff;border:1px solid #b4b4b4;box-shadow:inset -1px -1px 0 #d8d8d8"></div><div class="a" style="left:280px;top:902px;width:17px;height:18px;background:#e1e1e1;border:1px solid #adadad"></div><svg class="a" style="left:284px;top:908px" width="9" height="6" viewBox="0 0 9 6"><path d="M0.8 0.8L4.5 4.6L8.2 0.8" stroke="#444" stroke-width="1.2" fill="none"/></svg>
<div class="t" style="left:-40px;width:100px;text-align:right;top:925.5px;font-size:12px">检查所见</div>
<div class="a" style="left:60px;top:922.5px;width:238px;height:20px;background:#fff;border:1px solid #b4b4b4;box-shadow:inset -1px -1px 0 #d8d8d8"></div><div class="a" style="left:280px;top:923.5px;width:17px;height:18px;background:#e1e1e1;border:1px solid #adadad"></div><svg class="a" style="left:284px;top:929.5px" width="9" height="6" viewBox="0 0 9 6"><path d="M0.8 0.8L4.5 4.6L8.2 0.8" stroke="#444" stroke-width="1.2" fill="none"/></svg>
<div class="t" style="left:-40px;width:100px;text-align:right;top:949px;font-size:12px">检查意见</div>
<div class="a" style="left:60px;top:946px;width:238px;height:20px;background:#fff;border:1px solid #b4b4b4;box-shadow:inset -1px -1px 0 #d8d8d8"></div><div class="a" style="left:280px;top:947px;width:17px;height:18px;background:#e1e1e1;border:1px solid #adadad"></div><svg class="a" style="left:284px;top:953px" width="9" height="6" viewBox="0 0 9 6"><path d="M0.8 0.8L4.5 4.6L8.2 0.8" stroke="#444" stroke-width="1.2" fill="none"/></svg>
<div class="a" style="left:9px;top:977px;width:13px;height:13px;background:#fff;border:1px solid #333"></div>
<svg class="a" style="left:10px;top:978px" width="11" height="11" viewBox="0 0 11 11"><path d="M1.5 5.5L4.3 8.5L9.5 2" stroke="#222" stroke-width="1.3" fill="none"/></svg>
<div class="t" style="left:26px;top:976px;font-size:12px;line-height:15px">检查日期从</div>
<div class="a" style="left:86px;top:973px;width:94px;height:19px;background:#fff;border:1px solid #828282;border-right-color:#e0e0e0;border-bottom-color:#e0e0e0;box-shadow:inset 1px 1px 0 #a0a0a0"></div><div class="t" style="left:89px;top:976px;font-family:'Liberation Mono',monospace;font-weight:bold;font-size:11.6px;line-height:14px">2023/ 4/23</div><div class="a" style="left:162px;top:975px;width:16px;height:15px;background:#f0f0f0;border:1px solid #fff;border-right-color:#696969;border-bottom-color:#696969;box-shadow:inset -1px -1px 0 #a0a0a0"></div><svg class="a" style="left:166px;top:981px" width="8" height="4" viewBox="0 0 8 4"><path d="M0.5 0H7.5L4 4Z" fill="#000"/></svg>
<div class="t" style="left:185px;top:976px;font-size:12px;line-height:15px">到</div>
<div class="a" style="left:200px;top:973px;width:94px;height:19px;background:#fff;border:1px solid #828282;border-right-color:#e0e0e0;border-bottom-color:#e0e0e0;box-shadow:inset 1px 1px 0 #a0a0a0"></div><div class="t" style="left:203px;top:976px;font-family:'Liberation Mono',monospace;font-weight:bold;font-size:11.6px;line-height:14px">2023/ 4/24</div><div class="a" style="left:276px;top:975px;width:16px;height:15px;background:#f0f0f0;border:1px solid #fff;border-right-color:#696969;border-bottom-color:#696969;box-shadow:inset -1px -1px 0 #a0a0a0"></div><svg class="a" style="left:280px;top:981px" width="8" height="4" viewBox="0 0 8 4"><path d="M0.5 0H7.5L4 4Z" fill="#000"/></svg>
<div class="a" style="left:359px;top:40px;width:4px;height:964px;background:#f1f1f1"></div>
<div class="a" style="left:363px;top:41px;width:1px;height:963px;background:#dcdcdc"></div>
<div class="a" style="left:364px;top:40px;width:1px;height:964px;background:#f8f8f8"></div>
<div class="a" style="left:365px;top:40px;width:1px;height:964px;background:#dcdcdc"></div>
<div class="a" style="left:366px;top:40px;width:8px;height:964px;background:#f3f3f3"></div>
<div class="a" style="left:374px;top:41px;width:1px;height:963px;background:#dddddd"></div>
<div class="a" style="left:375px;top:246px;width:4px;height:758px;background:#fff"></div>
<div class="a" style="left:368px;top:550px;width:2px;height:27px;background-image:repeating-linear-gradient(to bottom,#9a9a9a 0,#9a9a9a 2px,transparent 2px,transparent 4px)"></div>
<div class="a" style="left:375px;top:39px;width:1518px;height:207px;background:#fff"></div>
<div class="a" style="left:477px;top:43px;width:99px;height:22px;background:#f0f0f0;border:1px solid #d9d9d9"></div>
<div class="t c" style="left:477px;width:98px;top:47px;font-size:12px;line-height:15px;color:#222">诊断报告</div>
<div class="a" style="left:575px;top:43px;width:101px;height:22px;background:#f0f0f0;border:1px solid #d9d9d9"></div>
<div class="t c" style="left:575px;width:100px;top:47px;font-size:12px;line-height:15px;color:#222">读取影像光盘</div>
<div class="a" style="left:675px;top:43px;width:101px;height:22px;background:#f0f0f0;border:1px solid #d9d9d9"></div>
<div class="t c" style="left:675px;width:100px;top:47px;font-size:12px;line-height:15px;color:#222">刻录备份</div>
<div class="a" style="left:775px;top:43px;width:101px;height:22px;background:#f0f0f0;border:1px solid #d9d9d9"></div>
<div class="t c" style="left:775px;width:100px;top:47px;font-size:12px;line-height:15px;color:#222">统计分析</div>
<div class="a" style="left:875px;top:43px;width:101px;height:22px;background:#f0f0f0;border:1px solid #d9d9d9"></div>
<div class="t c" style="left:875px;width:100px;top:47px;font-size:12px;line-height:15px;color:#222">程序服务日志</div>
<div class="a" style="left:375px;top:64px;width:1518px;height:1px;background:#d9d9d9"></div>
<div class="a" style="left:375px;top:65px;width:1518px;height:2px;background:#f4f4f4"></div>
<div class="a" style="left:374px;top:41px;width:104px;height:25px;background:#fff;border:1px solid #d9d9d9;border-bottom:none"></div>
<div class="t c" style="left:375px;width:103px;top:45.5px;font-size:12px;line-height:15px;color:#222">看图</div>
<div class="t" style="left:1866px;top:46px;font-size:12px;line-height:15px">主菜单</div>
<div class="a" style="left:377px;top:126px;width:1516px;height:1px;background:#d2d2d2"></div>
<div class="a" style="left:377px;top:185px;width:1516px;height:1px;background:#d2d2d2"></div>
<div class="a" style="left:377px;top:244px;width:1516px;height:1px;background:#d2d2d2"></div>
<div class="a" style="left:377px;top:67px;width:1px;height:178px;background:#e6e6e6"></div>
<div class="a" style="left:375px;top:245px;width:1518px;height:1px;background:#f0f0f0"></div>
<div class="tb" style="left:378px;top:67px;width:718px;height:59px"></div>
<div class="tb" style="left:1096px;top:67px;width:67.5px;height:59px"></div>
<div class="tb" style="left:1163.5px;top:67px;width:443.5px;height:59px"></div>
<div class="grip" style="left:379.5px;top:68px;height:55px"></div>
<div class="grip" style="left:1097.5px;top:68px;height:55px"></div>
<div class="grip" style="left:1165.5px;top:68px;height:55px"></div>
<svg class="a" style="left:400px;top:75px" width="28" height="22" viewBox="0 0 28 22" ><path d="M1 6.5Q1 4.5 3 4.5H7L8.5 6.5H17.5V12H5L1 21Z" fill="url(#gm)" stroke="#6e6e6e" stroke-width="1"/><path d="M1.5 21L6 12.5H23.5L18.5 21Z" fill="url(#gv)" stroke="#5a5a5a" stroke-width="1"/><path d="M23.5 0.5V7.5M20 4H27M21 1.5L26 6.5M26 1.5L21 6.5" stroke="#8a8a8a" stroke-width="0.9"/></svg>
<div class="lbl" style="left:365.0px;top:106.4px;width:100px">打开影像</div>
<svg class="a" style="left:461px;top:75.5px" width="23" height="23" viewBox="0 0 23 23" ><path d="M4.0 0.0L8.0 4.0L4.0 8.0L0.0 4.0Z" fill="#333"/><path d="M4.0 7.5L8.0 11.5L4.0 15.5L0.0 11.5Z" fill="#333"/><path d="M4.0 15.0L8.0 19.0L4.0 23.0L0.0 19.0Z" fill="#333"/><path d="M11.5 0.0L15.5 4.0L11.5 8.0L7.5 4.0Z" fill="#333"/><path d="M11.5 7.5L15.5 11.5L11.5 15.5L7.5 11.5Z" fill="#333"/><path d="M11.5 15.0L15.5 19.0L11.5 23.0L7.5 19.0Z" fill="#333"/><path d="M19.0 0.0L23.0 4.0L19.0 8.0L15.0 4.0Z" fill="#333"/><path d="M19.0 7.5L23.0 11.5L19.0 15.5L15.0 11.5Z" fill="#333"/><path d="M19.0 15.0L23.0 19.0L19.0 23.0L15.0 19.0Z" fill="#333"/></svg>
<div class="lbl" style="left:423.0px;top:106.4px;width:100px">同步操作</div>
<svg class="a" style="left:532.5px;top:76px" width="24" height="23" viewBox="0 0 24 23" ><rect x="0.5" y="1.5" width="16" height="20" fill="#f6f6f6" stroke="#8a8a8a"/><path d="M3.5 6H10M3.5 9H9M3.5 12H8M3.5 15H12M3.5 18H11" stroke="#555" stroke-width="1"/><path d="M22.5 2L9 14.5L8 17L10.5 16.5L23 4Z" fill="#777" stroke="#555" stroke-width="0.6"/></svg>
<div class="lbl" style="left:492.5px;top:106.4px;width:100px">简易报告窗口</div>
<svg class="a" style="left:597px;top:73px" width="30" height="30" viewBox="0 0 30 30" ><rect x="0.5" y="0.5" width="29" height="29" fill="#f7f7f7" stroke="#d9d9d9"/><path d="M15 0V30M0 15H30" stroke="#d9d9d9" stroke-width="2"/></svg>
<div class="lbl dis" style="left:562.5px;top:106.4px;width:100px">影像布局</div>
<div class="combo" style="left:644px;top:86px;width:60px;height:22px"></div><div class="cbtn" style="left:691px;top:87px;width:13px;height:20px"></div><svg class="a" style="left:693px;top:94.5px" width="9" height="6" viewBox="0 0 9 6"><path d="M0.7 0.8L4.5 4.8L8.3 0.8" stroke="#555" stroke-width="1.1" fill="none"/></svg><div class="t" style="left:647px;top:89.5px;font-size:12.7px;line-height:15px">2 X 2</div>
<div class="sel" style="left:706px;top:70px;width:58px;height:54px"></div>
<div class="t c sf" style="left:706px;width:58px;top:72.5px;font-size:33.5px;line-height:36px;font-weight:bold;color:#000">T</div>
<div class="lbl" style="left:685.0px;top:106.4px;width:100px">显示标注</div>
<div class="sep" style="left:766.5px;top:72px;height:51px"></div>
<svg class="a" style="left:797px;top:77px" width="26" height="23" viewBox="0 0 26 23" ><path d="M0.5 21.5H7L19 1.5H25.5" fill="none" stroke="#555" stroke-width="2.6"/><path d="M0.5 21.5H7L19 1.5H25.5" fill="none" stroke="#fff" stroke-width="1"/><circle cx="7" cy="8.5" r="4.6" fill="#fff" stroke="#444" stroke-width="1"/><path d="M7 3.9A4.6 4.6 0 0 1 7 13.1Z" fill="#222"/><circle cx="19" cy="14.5" r="3" fill="#fff" stroke="#444" stroke-width="1"/><path d="M19 9V10.5M19 18.5V20M13.5 14.5H15M23 14.5H24.5M15.2 10.7L16.2 11.7M21.8 17.3L22.8 18.3M22.8 10.7L21.8 11.7M15.2 18.3L16.2 17.3" stroke="#444" stroke-width="1"/></svg>
<div class="lbl" style="left:760.0px;top:106.4px;width:100px">预置窗宽窗位</div>
<div class="combo" style="left:854px;top:86px;width:146px;height:22px"></div><div class="cbtn" style="left:987px;top:87px;width:13px;height:20px"></div><svg class="a" style="left:989px;top:94.5px" width="9" height="6" viewBox="0 0 9 6"><path d="M0.7 0.8L4.5 4.8L8.3 0.8" stroke="#555" stroke-width="1.1" fill="none"/></svg>
<svg class="a" style="left:1019.3px;top:76px" width="23" height="24" viewBox="0 0 23 24" ><path d="M2.5 6V19.5Q2.5 22.5 11.5 22.5Q20.5 22.5 20.5 19.5V6Z" fill="url(#gh)" stroke="#777" stroke-width="0.9"/><path d="M1 2.8Q1 0.8 11.5 0.8Q22 0.8 22 2.8V5.2Q22 6.8 11.5 6.8Q1 6.8 1 5.2Z" fill="#e4e4e4" stroke="#777" stroke-width="0.9"/><path d="M2 2.6Q11.5 4.6 21 2.6" stroke="#fff" stroke-width="1" fill="none"/><path d="M6 8.5V20M9.7 9V21M13.4 9V21M17 8.5V20" stroke="#666" stroke-width="1.5"/></svg>
<div class="lbl" style="left:981.0px;top:106.4px;width:100px">清空影像</div>
<div class="lbl" style="left:1027.0px;top:90.5px;width:100px">伪彩</div>
<svg class="a" style="left:1119.5px;top:74px" width="26" height="26" viewBox="0 0 26 26" ><circle cx="13" cy="13" r="11.6" fill="#fff" stroke="#555" stroke-width="1.9"/><circle cx="13" cy="6.8" r="2.1" fill="#333"/><path d="M9.6 10.6H14.8V19.2H16.8V20.8H9.4V19.2H11.2V12.2H9.6Z" fill="#333"/></svg>
<div class="lbl" style="left:1082.5px;top:106.4px;width:100px">影像属性</div>
<svg class="a" style="left:1185px;top:82px" width="8" height="11" viewBox="0 0 8 11" ><path d="M0.5 0.5L7 5.5L0.5 10.5Z" fill="#d0d0d0" stroke="#bdbdbd" stroke-width="0.8"/></svg>
<div class="lbl dis" style="left:1138.8px;top:98.8px;width:100px">播放</div>
<div class="lbl" style="left:1172.0px;top:90.5px;width:100px">慢</div>
<div class="a" style="left:1243px;top:88px;width:61px;height:15px;background:#e7eaea;border:1px solid #d6d6d6"></div><svg class="a" style="left:1264.5px;top:88.5px" width="10" height="16" viewBox="0 0 10 16"><path d="M0 0H10V11L5 15.5L0 11Z" fill="#0078d7"/></svg>
<div class="lbl" style="left:1268.8px;top:90.5px;width:100px">快</div>
<div class="lbl" style="left:1311.8px;top:90.5px;width:100px">反向播放</div>
<div class="sep" style="left:1393.5px;top:72px;height:51px"></div>
<div class="lbl" style="left:1376.0px;top:90.5px;width:100px">DSA剪影</div>
<div class="sep" style="left:1457.3px;top:72px;height:51px"></div>
<div class="lbl" style="left:1445.0px;top:90.5px;width:100px">当前帧:</div>
<div class="a" style="left:1531px;top:88px;width:67px;height:15px;background:#e7eaea;border:1px solid #d6d6d6"></div><svg class="a" style="left:1531px;top:88.5px" width="10" height="16" viewBox="0 0 10 16"><path d="M0 0H10V11L5 15.5L0 11Z" fill="#0078d7"/></svg>
<div class="tb" style="left:378px;top:127px;width:434px;height:58px"></div>
<div class="tb" style="left:812px;top:127px;width:348px;height:58px"></div>
<div class="tb" style="left:1160px;top:127px;width:107.5px;height:58px"></div>
<div class="tb" style="left:1267.5px;top:127px;width:278.0px;height:58px"></div>
<div class="grip" style="left:379.5px;top:128px;height:54px"></div>
<div class="grip" style="left:814.3px;top:128px;height:54px"></div>
<div class="grip" style="left:1162.2px;top:128px;height:54px"></div>
<div class="grip" style="left:1269.3px;top:128px;height:54px"></div>
<div class="sel" style="left:386px;top:129px;width:39px;height:54px"></div>
<svg class="a" style="left:400px;top:139.5px" width="13" height="20" viewBox="0 0 13 20" ><path d="M1 0.8V15.5L4.4 12.4L7 18.6L9.4 17.5L6.8 11.5H11.2Z" fill="#fff" stroke="#111" stroke-width="1.1" stroke-linejoin="miter"/></svg>
<div class="lbl" style="left:355.5px;top:165.1px;width:100px">选择</div>
<div class="sep" style="left:427.3px;top:131px;height:51px"></div>
<svg class="a" style="left:437.5px;top:134px" width="22" height="22" viewBox="0 0 22 22" ><path d="M0.8 0.8L21 21" stroke="#333" stroke-width="1.7"/></svg>
<div class="lbl" style="left:400.0px;top:165.1px;width:100px">直线</div>
<svg class="a" style="left:473px;top:132px" width="29" height="29" viewBox="0 0 29 29" ><path d="M2 6.5L26 2.5L9 12L23.5 26L10 18L2 23.5L7 12Z" fill="#f3f3f3" stroke="#8a8a8a" stroke-width="0.9"/><rect x="0.3999999999999999" y="4.9" width="3.2" height="3.2" fill="#444"/><rect x="24.9" y="0.3999999999999999" width="3.2" height="3.2" fill="#444"/><rect x="0.3999999999999999" y="21.9" width="3.2" height="3.2" fill="#444"/><rect x="22.4" y="24.4" width="3.2" height="3.2" fill="#444"/></svg>
<div class="lbl" style="left:438.8px;top:165.1px;width:100px">曲线</div>
<svg class="a" style="left:513px;top:131px" width="28" height="28" viewBox="0 0 28 28" ><path d="M2 4L10 7L25 2L19 11L23 25L13 17L2 21L6 12Z" fill="url(#gl)" stroke="#9a9a9a" stroke-width="0.9"/><rect x="0.3999999999999999" y="2.4" width="3.2" height="3.2" fill="#444"/><rect x="24.4" y="0.19999999999999996" width="3.2" height="3.2" fill="#444"/><rect x="0.3999999999999999" y="19.9" width="3.2" height="3.2" fill="#444"/><rect x="22.4" y="23.599999999999998" width="3.2" height="3.2" fill="#444"/></svg>
<div class="lbl" style="left:478.0px;top:165.1px;width:100px">区域</div>
<svg class="a" style="left:553px;top:138px" width="27" height="18" viewBox="0 0 27 18" ><path d="M0.5 6.5L26.5 0.8M1.5 16.5H26.5M7 16.5L21.5 2" stroke="#333" stroke-width="1" fill="none"/><path d="M11 12.5Q14.5 13 15 16.5M12 5Q14 7.5 16.5 6.5" stroke="#333" stroke-width="0.9" fill="none"/></svg>
<div class="lbl" style="left:516.8px;top:165.1px;width:100px">角度</div>
<div class="sep" style="left:589.5px;top:131px;height:51px"></div>
<svg class="a" style="left:601.5px;top:137px" width="28" height="21" viewBox="0 0 28 21" ><text x="0" y="20.5" font-family="Liberation Sans,sans-serif" font-size="28" fill="#8c8c8c" textLength="9.5" lengthAdjust="spacingAndGlyphs">R</text><ellipse cx="15.3" cy="10.5" rx="4.4" ry="9.4" fill="none" stroke="#8c8c8c" stroke-width="1.6"/><path d="M15.3 1V20M11 10.5H19.6" stroke="#8c8c8c" stroke-width="1"/><path d="M25.6 1V20.5M23.6 1H27.6M23.6 20.3H27.6" stroke="#8c8c8c" stroke-width="1.7"/></svg>
<div class="lbl" style="left:565.0px;top:165.1px;width:100px">ROI值</div>
<div class="sep" style="left:639.4px;top:131px;height:51px"></div>
<svg class="a" style="left:657px;top:133px" width="29" height="28" viewBox="0 0 29 28" ><rect x="0.7" y="0.7" width="27.6" height="26.6" fill="#fff" stroke="#444" stroke-width="1.2"/><text x="14.5" y="23.5" text-anchor="middle" font-family="Liberation Sans,sans-serif" font-weight="bold" font-size="27" fill="#4a4a4a">A</text></svg>
<div class="lbl" style="left:622.0px;top:165.1px;width:100px">标注文字</div>
<div class="sep" style="left:703.4px;top:131px;height:51px"></div>
<svg class="a" style="left:720px;top:131px" width="30" height="31" viewBox="0 0 30 31" ><path d="M0.5 20L15 14L29.5 20V25L15 30.5L0.5 25Z" fill="#d9d9d9" stroke="#9a9a9a" stroke-width="0.7"/><path d="M0.5 20L15 26L29.5 20L15 14Z" fill="#ececec" stroke="#aaa" stroke-width="0.6"/><path d="M15 26V30.5L29.5 25V20Z" fill="#b5b5b5"/><ellipse cx="14.5" cy="18.5" rx="4.8" ry="2.4" fill="#9a9a9a"/><rect x="12" y="1" width="5" height="17.5" rx="2.2" fill="url(#gh)" stroke="#8a8a8a" stroke-width="0.6"/><circle cx="22" cy="18.5" r="1.4" fill="#e05050"/></svg>
<div class="lbl" style="left:685.5px;top:165.1px;width:100px">擦除标记</div>
<svg class="a" style="left:773.5px;top:133px" width="28" height="27" viewBox="0 0 28 27" ><text x="0" y="9.5" font-family="Liberation Sans,sans-serif" font-size="10.5" fill="#8c8c8c">C/T</text><path d="M2.5 25.5L21 7.2" stroke="#8c8c8c" stroke-width="1.9"/><path d="M22.5 7.2H28M2 26H6M23 26H28" stroke="#8c8c8c" stroke-width="1.5"/><path d="M25.5 9V25M6.5 26H23" stroke="#8c8c8c" stroke-width="1" stroke-dasharray="1 1.3"/></svg>
<div class="lbl" style="left:737.5px;top:165.1px;width:100px">心胸比</div>
<svg class="a" style="left:836px;top:134px" width="27" height="26" viewBox="0 0 27 26" ><path d="M0.5 5.5H21.5V25.5M5.5 0.5V20.5H26.5" fill="none" stroke="#7a7a7a" stroke-width="2.2"/></svg>
<div class="lbl" style="left:800.0px;top:165.1px;width:100px">剪裁区域</div>
<div class="sep" style="left:881.3px;top:131px;height:51px"></div>
<svg class="a" style="left:904.5px;top:133px" width="32" height="27" viewBox="0 0 32 27" ><rect x="1" y="2.5" width="11" height="22" fill="#f5f5f5" stroke="#8c8c8c" stroke-width="1.4"/><path d="M6.5 2.5V24.5M1 12.5H12" stroke="#8c8c8c" stroke-width="1.4"/><path d="M15 5.5H27V27M19 0.5V21.5H31" fill="none" stroke="#8c8c8c" stroke-width="1.8"/></svg>
<div class="lbl" style="left:870.0px;top:165.1px;width:100px">剪裁到看图</div>
<svg class="a" style="left:974.5px;top:133px" width="32" height="27" viewBox="0 0 32 27" ><path d="M3 8L6 2.5H12.5L13.5 8" fill="#e8e8e8" stroke="#888" stroke-width="1"/><rect x="0.8" y="8" width="14" height="13" rx="2" fill="#9c9c9c" stroke="#777" stroke-width="0.8"/><path d="M4 5H11M3.5 6.8H12" stroke="#666" stroke-width="0.8"/><circle cx="10" cy="21.5" r="4.6" fill="#666" stroke="#fff" stroke-width="0.8"/><text x="10" y="24.6" text-anchor="middle" font-family="Liberation Sans,sans-serif" font-weight="bold" font-size="8" fill="#fff">R</text><path d="M15.5 5.5H27V27M19.5 0.5V21.5H31.5" fill="none" stroke="#8c8c8c" stroke-width="1.8"/></svg>
<div class="lbl" style="left:940.0px;top:165.1px;width:100px">剪裁到照相</div>
<svg class="a" style="left:1045.5px;top:133px" width="30" height="27" viewBox="0 0 30 27" ><rect x="0.8" y="1.5" width="9.6" height="22" fill="#f7f7f7" stroke="#8c8c8c" stroke-width="1.2"/><path d="M2.5 6H8.5M2.5 9H6M2.5 16H8.5M2.5 19H8.5" stroke="#666" stroke-width="0.9"/><path d="M3 12.5L5 14.5L8.8 10" stroke="#555" stroke-width="1.1" fill="none"/><path d="M13.5 5.5H25V27M17.5 0.5V21.5H29.5" fill="none" stroke="#8c8c8c" stroke-width="1.8"/></svg>
<div class="lbl" style="left:1010.0px;top:165.1px;width:100px">剪裁到报告</div>
<div class="sep" style="left:1097.4px;top:131px;height:51px"></div>
<svg class="a" style="left:1113.8px;top:131px" width="30" height="31" viewBox="0 0 30 31" ><path d="M0.5 20L15 14L29.5 20V25L15 30.5L0.5 25Z" fill="#d9d9d9" stroke="#9a9a9a" stroke-width="0.7"/><path d="M0.5 20L15 26L29.5 20L15 14Z" fill="#ececec" stroke="#aaa" stroke-width="0.6"/><path d="M15 26V30.5L29.5 25V20Z" fill="#b5b5b5"/><ellipse cx="14.5" cy="18.5" rx="4.8" ry="2.4" fill="#9a9a9a"/><rect x="12" y="1" width="5" height="17.5" rx="2.2" fill="url(#gh)" stroke="#8a8a8a" stroke-width="0.6"/><circle cx="22" cy="18.5" r="1.4" fill="#e05050"/></svg>
<div class="lbl" style="left:1080.0px;top:165.1px;width:100px">擦除标记</div>
<svg class="a" style="left:1175px;top:133.5px" width="25" height="27" viewBox="0 0 25 27" ><path d="M24 0.8L9 8.5L5.5 15.5L13.5 13L0.8 26L17 17L20.5 10L13 12.5L23.5 5.5Z" fill="url(#gm)" stroke="#666" stroke-width="0.9"/></svg>
<div class="lbl" style="left:1138.0px;top:165.1px;width:100px">发送</div>
<svg class="a" style="left:1222.5px;top:138px" width="26" height="21" viewBox="0 0 26 21" ><path d="M3.5 8L7 1H22.5L23.5 8Z" fill="#f3f3f3" stroke="#555" stroke-width="0.9"/><path d="M6 3H22M5.5 4.8H22.6M5 6.5H23" stroke="#444" stroke-width="0.9"/><rect x="0.6" y="8" width="23.5" height="9.5" rx="1.5" fill="url(#gv)" stroke="#555" stroke-width="0.9"/><path d="M1 14.5H24" stroke="#666" stroke-width="0.8"/><circle cx="20" cy="15.5" r="4.8" fill="#4c4c4c" stroke="#fff" stroke-width="0.9"/><text x="20" y="18.6" text-anchor="middle" font-family="Liberation Sans,sans-serif" font-weight="bold" font-size="8.5" fill="#fff">R</text></svg>
<div class="lbl" style="left:1187.0px;top:165.1px;width:100px">照相排版</div>
<svg class="a" style="left:1304.5px;top:135px" width="25" height="24" viewBox="0 0 25 24" ><rect x="0.7" y="0.7" width="23.6" height="22.6" fill="#fff" stroke="#555" stroke-width="1.2"/><rect x="1.4" y="3" width="22.2" height="15.5" fill="#777"/><ellipse cx="7.4" cy="10.8" rx="4" ry="6.4" fill="url(#gr)"/><ellipse cx="17.6" cy="10.8" rx="4" ry="6.4" fill="url(#gr)"/></svg>
<div class="lbl" style="left:1267.0px;top:165.1px;width:100px">比对影像模式</div>
<div class="sep" style="left:1360.5px;top:131px;height:51px"></div>
<div class="sel" style="left:1364px;top:129px;width:58px;height:54px"></div>
<svg class="a" style="left:1382px;top:135.5px" width="25" height="24" viewBox="0 0 25 24" ><rect x="0.9" y="0.9" width="23.2" height="22.2" fill="#fff" stroke="#111" stroke-width="1.6"/><rect x="1.6" y="3" width="21.8" height="15.5" fill="#1d1d1d"/><ellipse cx="7.2" cy="10.8" rx="3.7" ry="6" fill="#e8e8e8"/><ellipse cx="17.5" cy="10.8" rx="3.7" ry="6" fill="#e8e8e8"/><text x="7.2" y="14.2" text-anchor="middle" font-family="Liberation Sans,sans-serif" font-size="9" fill="#222">1</text><text x="17.5" y="14.2" text-anchor="middle" font-family="Liberation Sans,sans-serif" font-size="9" fill="#222">1</text></svg>
<div class="lbl" style="left:1343.0px;top:165.1px;width:100px">同步滚动</div>
<svg class="a" style="left:1435.5px;top:132px" width="30" height="30" viewBox="0 0 30 30" ><rect x="0.5" y="0.5" width="29" height="29" fill="#f7f7f7" stroke="#d9d9d9"/><path d="M15 0V30M0 15H30" stroke="#d9d9d9" stroke-width="2"/></svg>
<div class="lbl dis" style="left:1400.5px;top:165.1px;width:100px">序列布局</div>
<div class="combo" style="left:1481px;top:146px;width:61px;height:21px"></div><div class="cbtn" style="left:1529px;top:147px;width:13px;height:19px"></div><svg class="a" style="left:1531px;top:154.0px" width="9" height="6" viewBox="0 0 9 6"><path d="M0.7 0.8L4.5 4.8L8.3 0.8" stroke="#555" stroke-width="1.1" fill="none"/></svg><div class="t" style="left:1484px;top:149.0px;font-size:12.7px;line-height:15px">1 X 2</div>
<div class="tb" style="left:378px;top:186px;width:633px;height:58px"></div>
<div class="tb" style="left:1011px;top:186px;width:166.5px;height:58px"></div>
<div class="grip" style="left:379.5px;top:187px;height:54px"></div>
<div class="grip" style="left:1013.5px;top:187px;height:54px"></div>
<div class="sel" style="left:386px;top:188px;width:39px;height:54px"></div>
<svg class="a" style="left:400px;top:198.5px" width="13" height="20" viewBox="0 0 13 20" ><path d="M1 0.8V15.5L4.4 12.4L7 18.6L9.4 17.5L6.8 11.5H11.2Z" fill="#fff" stroke="#111" stroke-width="1.1" stroke-linejoin="miter"/></svg>
<div class="lbl" style="left:355.5px;top:224.2px;width:100px">选择</div>
<div class="sep" style="left:427.3px;top:190px;height:51px"></div>
<svg class="a" style="left:446.8px;top:194.5px" width="23" height="21" viewBox="0 0 23 21" ><path d="M17 19.5V9.5Q17 5.8 14.3 5.8Q11.4 5.8 11.4 10.5H15L8 19.4L0.8 10.5H5.6Q5.6 1 14.5 1Q22.2 1 22.2 9V19.5Z" fill="url(#gh)" stroke="#666" stroke-width="1"/></svg>
<div class="lbl" style="left:409.5px;top:224.2px;width:100px">还原影像</div>
<div class="sep" style="left:491.5px;top:190px;height:51px"></div>
<svg class="a" style="left:500px;top:193px" width="24" height="25" viewBox="0 0 24 25" ><path d="M7.5 24.5Q3.5 18 0.8 12.5Q2.5 11 5 13.5L7 15.5L5.2 4.5Q6.6 3 8 4.5L9.8 11.5L9.6 1.8Q11.4 0.3 12.6 1.8L13.2 11L15.3 2.6Q17 1.6 18 3L16.6 12L20 6.3Q21.8 6 22.2 7.5L18.8 16.5Q17.6 21.5 15.5 24.5Z" fill="url(#gl)" stroke="#555" stroke-width="0.9" stroke-linejoin="round"/></svg>
<div class="lbl" style="left:463.8px;top:224.2px;width:100px">漫游</div>
<svg class="a" style="left:542px;top:196px" width="22" height="22" viewBox="0 0 22 22" ><rect x="3.8" y="3.8" width="14.4" height="14.4" fill="#e6e6e6" stroke="#555" stroke-width="1.3"/><path d="M11 5V17M5 11H17M7 7L15 15M15 7L7 15" stroke="#555" stroke-width="1"/><path d="M1 1L7 7M21 1L15 7M1 21L7 15M21 21L15 15" stroke="#555" stroke-width="1.3"/><path d="M0.5 0.5H5L0.5 5ZM21.5 0.5H17L21.5 5ZM0.5 21.5H5L0.5 17ZM21.5 21.5H17L21.5 17Z" fill="#555"/></svg>
<div class="lbl" style="left:502.5px;top:224.2px;width:100px">缩放</div>
<svg class="a" style="left:590.8px;top:196px" width="24" height="23" viewBox="0 0 24 23" ><path d="M10 14L1.5 21.5" stroke="#777" stroke-width="2.6" stroke-linecap="round"/><circle cx="15.5" cy="8.5" r="7.6" fill="#f5f5f5" stroke="#9a9a9a" stroke-width="1.3"/><path d="M15.5 4.5V12.5M11.5 8.5H19.5" stroke="#555" stroke-width="1.1"/></svg>
<div class="lbl" style="left:551.8px;top:224.2px;width:100px">放大图像</div>
<svg class="a" style="left:645.2px;top:196px" width="24" height="23" viewBox="0 0 24 23" ><path d="M14 14L22.5 21.5" stroke="#777" stroke-width="2.6" stroke-linecap="round"/><circle cx="8.5" cy="8.5" r="7.6" fill="#f1f1f1" stroke="#9a9a9a" stroke-width="1.3"/><path d="M4.8 7.8H11.8" stroke="#777" stroke-width="1.1"/></svg>
<div class="lbl" style="left:609.5px;top:224.2px;width:100px">缩小图像</div>
<svg class="a" style="left:707px;top:196px" width="22" height="22" viewBox="0 0 22 22" ><rect x="3.8" y="3.8" width="14.4" height="14.4" fill="url(#gr)" stroke="#555" stroke-width="1.3"/><path d="M1 1L7 7M21 1L15 7M1 21L7 15M21 21L15 15" stroke="#555" stroke-width="1.3"/><path d="M0.5 0.5H5L0.5 5ZM21.5 0.5H17L21.5 5ZM0.5 21.5H5L0.5 17ZM21.5 21.5H17L21.5 17Z" fill="#555"/></svg>
<div class="lbl" style="left:668.0px;top:224.2px;width:100px">区域放大</div>
<svg class="a" style="left:757.3px;top:194.5px" width="23" height="23" viewBox="0 0 23 23" ><rect x="6.5" y="6.5" width="12" height="11.5" fill="#8c8c8c" stroke="#777" stroke-width="0.8"/><circle cx="7.6" cy="7.6" r="6.6" fill="#a8a8a8" fill-opacity="0.75" stroke="#4d4d4d" stroke-width="1.5"/><path d="M12.5 12.5L21 21.5" stroke="#555" stroke-width="2.6" stroke-linecap="round"/></svg>
<div class="lbl" style="left:719.5px;top:224.2px;width:100px">放大镜</div>
<div class="sep" style="left:795.5px;top:190px;height:51px"></div>
<svg class="a" style="left:813.5px;top:196px" width="28" height="21" viewBox="0 0 28 21" ><text x="0" y="20.5" font-family="Liberation Sans,sans-serif" font-size="28.6" fill="#8c8c8c" textLength="28" lengthAdjust="spacingAndGlyphs">ROI</text></svg>
<div class="lbl" style="left:777.0px;top:224.2px;width:100px">ROI调窗</div>
<svg class="a" style="left:869.5px;top:193px" width="27" height="26" viewBox="0 0 27 26" ><path d="M0.8 13L8 6.5V10.5H19V6.5L26.2 13L19 19.5V15.5H8V19.5Z" fill="#a6a6a6" stroke="#8a8a8a" stroke-width="0.8"/><path d="M13.5 0V26" stroke="#8a8a8a" stroke-width="1.3"/></svg>
<div class="lbl" style="left:833.8px;top:224.2px;width:100px">水平镜像</div>
<svg class="a" style="left:927.7px;top:192.5px" width="27" height="27" viewBox="0 0 27 27" ><path d="M13.5 0.8L20 8H16V19H20L13.5 26.2L7 19H11V8H7Z" fill="#a6a6a6" stroke="#8a8a8a" stroke-width="0.8"/><path d="M0 13.5H27" stroke="#8a8a8a" stroke-width="1.3"/></svg>
<div class="lbl" style="left:892.0px;top:224.2px;width:100px">垂直镜像</div>
<svg class="a" style="left:976.3px;top:192px" width="25" height="25" viewBox="0 0 25 25" ><rect x="0.7" y="0.7" width="23.6" height="23" fill="#fff" stroke="#444" stroke-width="1.4"/><rect x="0.7" y="0.7" width="12" height="23" fill="#444"/><rect x="4.8" y="5" width="3.4" height="13.5" fill="#fff"/><rect x="16.2" y="5" width="3.4" height="13.5" fill="#444"/></svg>
<div class="lbl" style="left:940.0px;top:224.2px;width:100px">负像</div>
<svg class="a" style="left:1027.7px;top:205px" width="21" height="19" viewBox="0 0 21 19" ><rect x="0.4" y="0.4" width="3.4" height="18.2" fill="#7b7b7b" stroke="#484848" stroke-width="0.8"/><g transform="translate(4.2 0) scale(0.84 1)"><path d="M0.6 9.5L10 0.6V5.3H18.4V13.7H10V18.4Z" fill="#7b7b7b" stroke="#484848" stroke-width="0.8"/></g></svg>
<svg class="a" style="left:1067px;top:205px" width="19" height="19" viewBox="0 0 19 19" ><path d="M0.6 9.5L10 0.6V5.3H18.4V13.7H10V18.4Z" fill="#7b7b7b" stroke="#484848" stroke-width="0.8"/></svg>
<svg class="a" style="left:1107px;top:205px" width="19" height="19" viewBox="0 0 19 19" ><path d="M18.4 9.5L9 0.6V5.3H0.6V13.7H9V18.4Z" fill="#7b7b7b" stroke="#484848" stroke-width="0.8"/></svg>
<svg class="a" style="left:1145px;top:205px" width="21" height="19" viewBox="0 0 21 19" ><rect x="16.2" y="0.4" width="3.4" height="18.2" fill="#7b7b7b" stroke="#484848" stroke-width="0.8"/><g transform="translate(0 0) scale(0.84 1)"><path d="M18.4 9.5L9 0.6V5.3H0.6V13.7H9V18.4Z" fill="#7b7b7b" stroke="#484848" stroke-width="0.8"/></g></svg>
<div class="a" style="left:909px;top:44px;width:80px;height:30px;background:rgba(40,40,40,0.93)"></div>
<svg class="a" style="left:940px;top:54px" width="14" height="9" viewBox="0 0 14 9"><path d="M1 1.2L7 7.2L13 1.2" stroke="#fff" stroke-width="1.5" fill="none"/></svg>
<div class="a" style="left:0;top:1004px;width:1893px;height:16px;background:#f0f0f0"></div>
<div class="a" style="left:28px;top:1004px;width:1830px;height:16px;background:#c8c8c8"></div>
<svg class="a" style="left:7px;top:1006px" width="9" height="13" viewBox="0 0 9 13"><path d="M7.5 1L2 6.5L7.5 12" stroke="#505050" stroke-width="1.8" fill="none"/></svg>
<svg class="a" style="left:1883px;top:1006px" width="9" height="13" viewBox="0 0 9 13"><path d="M1.5 1L7 6.5L1.5 12" stroke="#505050" stroke-width="1.8" fill="none"/></svg>
<div class="a" style="left:1680.5px;top:852px;width:220px;height:37px;background:#fafafa;border:1px solid #c9d6e6;border-radius:3px"></div>
<svg class="a" style="left:0;top:0" width="1893" height="1020" viewBox="0 0 1893 1020"><defs><linearGradient id="sg" x1="0" y1="0" x2="0.3" y2="1"><stop offset="0" stop-color="#ff7d42"/><stop offset="1" stop-color="#ef4a12"/></linearGradient></defs><g transform="rotate(-15 1706.5 871)"><rect x="1690.5" y="855.5" width="32.5" height="31.5" rx="4.5" fill="url(#sg)"/><path d="M1718.5 863.2C1713 860.2 1702 860.6 1697.5 864.6C1693.6 868.4 1698 871 1706.5 871.6C1715 872.2 1719.6 874.6 1715.6 878.6C1711 882.6 1700 882.6 1694.6 879.4" fill="none" stroke="#fff" stroke-width="4.6" stroke-linecap="round"/></g><path d="M1733.5 853V889M1737.5 853V889" stroke="#f6b09a" stroke-width="1"/><path d="M1746 865.5H1762V875.5H1746ZM1754 861.5V880" fill="none" stroke="#1266cf" stroke-width="2.5" stroke-linejoin="round" stroke-linecap="round"/><circle cx="1779.3" cy="866.8" r="1.9" fill="none" stroke="#1266cf" stroke-width="1.7"/><path d="M1786.2 870.6Q1790 870.4 1790 873.6Q1789.6 876.8 1785.4 878Q1787.8 876 1787 874.2Q1785 873.6 1786.2 870.6Z" fill="#1266cf" stroke="#1266cf" stroke-width="1"/><circle cx="1814.6" cy="871" r="9.7" fill="none" stroke="#1266cf" stroke-width="2.1"/><path d="M1811.2 866.6V869.8M1818 866.6V869.8" stroke="#1266cf" stroke-width="2.1" stroke-linecap="round"/><path d="M1809.6 873.4Q1814.6 878.8 1819.6 873.4" stroke="#1266cf" stroke-width="2" fill="none" stroke-linecap="round"/><path d="M1836.5 872.6L1846.8 862.4Q1847.8 861.6 1848.8 862.4L1852.4 866.4Q1853.2 867.4 1852.4 868.4L1844.4 877.6H1836.5ZM1840.6 868.6L1846.4 874.6" fill="none" stroke="#1266cf" stroke-width="2.4" stroke-linejoin="round"/><rect x="1869.6" y="860.6" width="8.2" height="14" rx="4.1" fill="#1266cf"/><path d="M1866.6 870Q1866.6 877.6 1873.7 877.6Q1880.8 877.6 1880.8 870M1873.7 877.6V880.6M1869.6 881H1877.8" fill="none" stroke="#1266cf" stroke-width="2" stroke-linecap="round"/></svg>
</body></html>
